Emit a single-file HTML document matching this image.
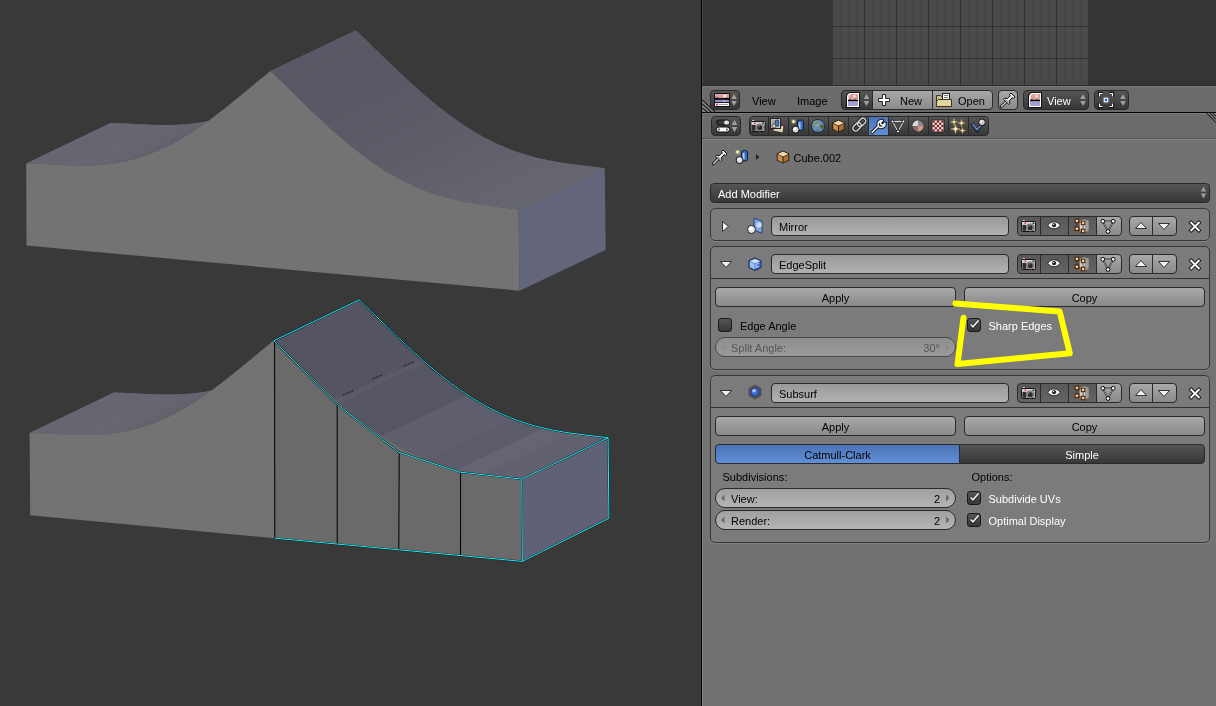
<!DOCTYPE html>
<html><head><meta charset="utf-8"><style>
*{margin:0;padding:0}
html,body{width:1216px;height:706px;overflow:hidden;background:#393939;font-family:"Liberation Sans",sans-serif;font-size:11px}
.a{position:absolute}
.w{position:absolute;box-sizing:border-box;border:1px solid #2a2a2a;line-height:18px;font-size:11px;white-space:nowrap;overflow:hidden;color:#000}
.c{text-align:center;padding-top:1px}
.bx{position:absolute;box-sizing:border-box;border:1px solid #383838;border-radius:5px;background:#7b7b7b;box-shadow:0 1px 0 #808080}
.lbl{position:absolute;color:#000;font-size:11px;line-height:12px;white-space:nowrap}
.cb{position:absolute;box-sizing:border-box;width:14px;height:14px;border:1px solid #191919;border-radius:3px;background:linear-gradient(#555,#373737)}
#ui{will-change:transform;position:absolute;left:0;top:0;width:1216px;height:706px}
</style></head><body>
<svg width="701" height="706" style="position:absolute;left:0;top:0">
<polygon points="26.2,163.5 28.3,163.5 30.3,163.6 32.3,163.6 34.3,163.7 36.3,163.7 38.3,163.8 40.3,163.9 42.3,164.0 44.3,164.1 46.3,164.2 48.3,164.3 50.3,164.4 52.3,164.5 54.3,164.6 56.3,164.7 58.3,164.9 60.3,165.0 62.3,165.0 64.3,165.1 66.3,165.2 68.3,165.3 70.3,165.4 72.3,165.4 74.3,165.5 76.3,165.5 78.3,165.6 80.3,165.6 82.3,165.6 84.3,165.6 86.3,165.5 88.3,165.5 90.3,165.4 92.3,165.4 94.3,165.3 96.3,165.2 98.3,165.0 100.3,164.9 102.3,164.7 104.3,164.5 106.3,164.3 108.3,164.1 110.3,163.8 112.3,163.6 114.3,163.3 116.3,162.9 118.3,162.6 120.3,162.2 122.3,161.8 124.4,161.4 126.4,161.0 128.4,160.5 130.4,160.0 132.4,159.5 134.4,159.0 136.4,158.4 138.4,157.8 140.4,157.2 142.4,156.5 144.4,155.9 146.4,155.2 148.4,154.4 150.4,153.7 152.4,152.9 154.4,152.1 156.4,151.3 158.4,150.4 160.4,149.5 162.4,148.6 164.4,147.7 166.4,146.7 168.4,145.7 170.4,144.7 172.4,143.7 174.4,142.6 176.4,141.5 178.4,140.4 180.4,139.2 182.4,138.1 184.4,136.9 186.4,135.7 188.4,134.4 190.4,133.2 192.4,131.9 194.4,130.6 196.4,129.2 198.4,127.9 200.4,126.5 202.4,125.1 204.4,123.7 206.4,122.3 208.4,120.9 210.4,119.4 212.4,117.9 214.4,116.4 216.4,114.9 218.4,113.4 220.4,111.8 222.5,110.3 224.5,108.7 226.5,107.1 228.5,105.5 230.5,103.9 232.5,102.3 234.5,100.7 236.5,99.1 238.5,97.4 240.5,95.8 242.5,94.2 244.5,92.5 246.5,90.9 248.5,89.2 250.5,87.5 252.5,85.9 254.5,84.2 256.5,82.6 258.5,80.9 260.5,79.3 262.5,77.7 264.5,76.0 266.5,74.4 268.5,72.8 270.5,71.2 355.8,30.4 353.8,32.0 351.8,33.6 349.8,35.2 347.8,36.8 345.8,38.5 343.8,40.1 341.8,41.8 339.8,43.4 337.8,45.1 335.7,46.7 333.7,48.4 331.7,50.1 329.7,51.7 327.7,53.4 325.7,55.0 323.7,56.7 321.7,58.3 319.7,59.9 317.7,61.5 315.6,63.2 313.6,64.8 311.6,66.4 309.6,67.9 307.6,69.5 305.6,71.1 303.6,72.6 301.6,74.2 299.6,75.7 297.6,77.2 295.5,78.7 293.5,80.1 291.5,81.6 289.5,83.0 287.5,84.4 285.5,85.8 283.5,87.2 281.5,88.5 279.5,89.9 277.5,91.2 275.5,92.5 273.4,93.7 271.4,95.0 269.4,96.2 267.4,97.4 265.4,98.6 263.4,99.7 261.4,100.8 259.4,101.9 257.4,103.0 255.4,104.0 253.3,105.1 251.3,106.1 249.3,107.0 247.3,108.0 245.3,108.9 243.3,109.8 241.3,110.6 239.3,111.5 237.3,112.3 235.3,113.1 233.2,113.8 231.2,114.6 229.2,115.3 227.2,115.9 225.2,116.6 223.2,117.2 221.2,117.8 219.2,118.4 217.2,118.9 215.2,119.4 213.1,119.9 211.1,120.4 209.1,120.8 207.1,121.3 205.1,121.7 203.1,122.0 201.1,122.4 199.1,122.7 197.1,123.0 195.1,123.3 193.1,123.5 191.0,123.8 189.0,124.0 187.0,124.2 185.0,124.3 183.0,124.5 181.0,124.6 179.0,124.7 177.0,124.8 175.0,124.9 173.0,125.0 170.9,125.0 168.9,125.1 166.9,125.1 164.9,125.1 162.9,125.1 160.9,125.0 158.9,125.0 156.9,124.9 154.9,124.9 152.9,124.8 150.8,124.8 148.8,124.7 146.8,124.6 144.8,124.5 142.8,124.4 140.8,124.3 138.8,124.2 136.8,124.1 134.8,124.0 132.8,123.9 130.7,123.8 128.7,123.7 126.7,123.6 124.7,123.5 122.7,123.4 120.7,123.3 118.7,123.3 116.7,123.2 114.7,123.2 112.7,123.1 110.7,123.1" fill="#626270"/>
<polygon points="270.5,71.2 272.5,73.1 274.5,75.0 276.5,76.9 278.5,78.9 280.5,80.8 282.5,82.7 284.5,84.7 286.5,86.6 288.5,88.6 290.5,90.5 292.5,92.5 294.5,94.4 296.5,96.4 298.5,98.3 300.5,100.3 302.5,102.2 304.5,104.2 306.5,106.1 308.5,108.0 310.5,109.9 312.5,111.9 314.5,113.8 316.5,115.7 318.5,117.5 320.5,119.4 322.5,121.3 324.5,123.1 326.5,124.9 328.5,126.8 330.5,128.6 332.5,130.4 334.5,132.1 336.5,133.9 338.5,135.7 340.5,137.4 342.5,139.1 344.5,140.8 346.5,142.5 348.5,144.1 350.5,145.8 352.5,147.4 354.5,149.0 356.5,150.6 358.5,152.1 360.5,153.7 362.5,155.2 364.5,156.7 366.5,158.1 368.5,159.6 370.5,161.0 372.5,162.4 374.5,163.8 376.5,165.2 378.5,166.5 380.5,167.8 382.5,169.1 384.5,170.4 386.5,171.6 388.5,172.8 390.5,174.0 392.5,175.2 394.5,176.3 396.5,177.4 398.5,178.5 400.5,179.6 402.5,180.6 404.5,181.7 406.5,182.7 408.5,183.6 410.5,184.6 412.5,185.5 414.5,186.4 416.5,187.3 418.5,188.2 420.5,189.0 422.5,189.8 424.5,190.6 426.5,191.3 428.5,192.1 430.5,192.8 432.5,193.5 434.5,194.2 436.5,194.8 438.5,195.5 440.5,196.1 442.5,196.7 444.5,197.2 446.5,197.8 448.5,198.3 450.5,198.8 452.5,199.3 454.5,199.8 456.5,200.3 458.5,200.7 460.5,201.2 462.5,201.6 464.5,202.0 466.5,202.4 468.5,202.7 470.5,203.1 472.5,203.4 474.5,203.8 476.5,204.1 478.5,204.4 480.5,204.7 482.5,205.0 484.5,205.3 486.5,205.6 488.5,205.8 490.5,206.1 492.5,206.3 494.5,206.6 496.5,206.8 498.5,207.1 500.5,207.3 502.5,207.6 504.5,207.8 506.5,208.1 508.5,208.3 510.5,208.6 512.5,208.8 514.5,209.1 516.5,209.3 518.5,209.6 604.8,168.3 602.8,168.0 600.8,167.8 598.8,167.5 596.8,167.3 594.8,167.0 592.8,166.8 590.7,166.5 588.7,166.3 586.7,166.1 584.7,165.8 582.7,165.6 580.7,165.3 578.7,165.1 576.7,164.8 574.7,164.6 572.7,164.3 570.7,164.0 568.7,163.8 566.7,163.5 564.6,163.2 562.6,162.9 560.6,162.6 558.6,162.2 556.6,161.9 554.6,161.5 552.6,161.2 550.6,160.8 548.6,160.4 546.6,160.0 544.6,159.5 542.6,159.1 540.6,158.6 538.5,158.2 536.5,157.7 534.5,157.2 532.5,156.6 530.5,156.1 528.5,155.5 526.5,154.9 524.5,154.3 522.5,153.7 520.5,153.0 518.5,152.4 516.5,151.7 514.5,151.0 512.4,150.2 510.4,149.5 508.4,148.7 506.4,147.9 504.4,147.0 502.4,146.2 500.4,145.3 498.4,144.4 496.4,143.5 494.4,142.5 492.4,141.6 490.4,140.6 488.4,139.6 486.3,138.5 484.3,137.5 482.3,136.4 480.3,135.2 478.3,134.1 476.3,132.9 474.3,131.8 472.3,130.5 470.3,129.3 468.3,128.0 466.3,126.8 464.3,125.4 462.3,124.1 460.2,122.8 458.2,121.4 456.2,120.0 454.2,118.6 452.2,117.1 450.2,115.6 448.2,114.2 446.2,112.6 444.2,111.1 442.2,109.6 440.2,108.0 438.2,106.4 436.2,104.8 434.1,103.1 432.1,101.5 430.1,99.8 428.1,98.1 426.1,96.4 424.1,94.7 422.1,92.9 420.1,91.2 418.1,89.4 416.1,87.6 414.1,85.8 412.1,84.0 410.1,82.2 408.0,80.3 406.0,78.5 404.0,76.6 402.0,74.7 400.0,72.8 398.0,70.9 396.0,69.0 394.0,67.1 392.0,65.2 390.0,63.3 388.0,61.3 386.0,59.4 384.0,57.4 381.9,55.5 379.9,53.6 377.9,51.6 375.9,49.7 373.9,47.7 371.9,45.8 369.9,43.8 367.9,41.9 365.9,39.9 363.9,38.0 361.9,36.1 359.9,34.2 357.9,32.3 355.8,30.4" fill="#626270"/>
<polygon points="26.2,163.5 28.3,163.5 112.7,123.1 110.7,123.1" fill="#696973"/>
<polygon points="28.3,163.5 30.3,163.6 114.7,123.2 112.7,123.1" fill="#696973"/>
<polygon points="30.3,163.6 32.3,163.6 116.7,123.2 114.7,123.2" fill="#696973"/>
<polygon points="32.3,163.6 34.3,163.7 118.7,123.3 116.7,123.2" fill="#686873"/>
<polygon points="34.3,163.7 36.3,163.7 120.7,123.3 118.7,123.3" fill="#686872"/>
<polygon points="36.3,163.7 38.3,163.8 122.7,123.4 120.7,123.3" fill="#686872"/>
<polygon points="38.3,163.8 40.3,163.9 124.7,123.5 122.7,123.4" fill="#686872"/>
<polygon points="40.3,163.9 42.3,164.0 126.7,123.6 124.7,123.5" fill="#686872"/>
<polygon points="42.3,164.0 44.3,164.1 128.7,123.7 126.7,123.6" fill="#686872"/>
<polygon points="44.3,164.1 46.3,164.2 130.7,123.8 128.7,123.7" fill="#686872"/>
<polygon points="46.3,164.2 48.3,164.3 132.8,123.9 130.7,123.8" fill="#686872"/>
<polygon points="48.3,164.3 50.3,164.4 134.8,124.0 132.8,123.9" fill="#686872"/>
<polygon points="50.3,164.4 52.3,164.5 136.8,124.1 134.8,124.0" fill="#686872"/>
<polygon points="52.3,164.5 54.3,164.6 138.8,124.2 136.8,124.1" fill="#686872"/>
<polygon points="54.3,164.6 56.3,164.7 140.8,124.3 138.8,124.2" fill="#686872"/>
<polygon points="56.3,164.7 58.3,164.9 142.8,124.4 140.8,124.3" fill="#686872"/>
<polygon points="58.3,164.9 60.3,165.0 144.8,124.5 142.8,124.4" fill="#686872"/>
<polygon points="60.3,165.0 62.3,165.0 146.8,124.6 144.8,124.5" fill="#686872"/>
<polygon points="62.3,165.0 64.3,165.1 148.8,124.7 146.8,124.6" fill="#686872"/>
<polygon points="64.3,165.1 66.3,165.2 150.8,124.8 148.8,124.7" fill="#686872"/>
<polygon points="66.3,165.2 68.3,165.3 152.9,124.8 150.8,124.8" fill="#686872"/>
<polygon points="68.3,165.3 70.3,165.4 154.9,124.9 152.9,124.8" fill="#686872"/>
<polygon points="70.3,165.4 72.3,165.4 156.9,124.9 154.9,124.9" fill="#686873"/>
<polygon points="72.3,165.4 74.3,165.5 158.9,125.0 156.9,124.9" fill="#696973"/>
<polygon points="74.3,165.5 76.3,165.5 160.9,125.0 158.9,125.0" fill="#696973"/>
<polygon points="76.3,165.5 78.3,165.6 162.9,125.1 160.9,125.0" fill="#696973"/>
<polygon points="78.3,165.6 80.3,165.6 164.9,125.1 162.9,125.1" fill="#696973"/>
<polygon points="80.3,165.6 82.3,165.6 166.9,125.1 164.9,125.1" fill="#696973"/>
<polygon points="82.3,165.6 84.3,165.6 168.9,125.1 166.9,125.1" fill="#696973"/>
<polygon points="84.3,165.6 86.3,165.5 170.9,125.0 168.9,125.1" fill="#696973"/>
<polygon points="86.3,165.5 88.3,165.5 173.0,125.0 170.9,125.0" fill="#696973"/>
<polygon points="88.3,165.5 90.3,165.4 175.0,124.9 173.0,125.0" fill="#696973"/>
<polygon points="90.3,165.4 92.3,165.4 177.0,124.8 175.0,124.9" fill="#686872"/>
<polygon points="92.3,165.4 94.3,165.3 179.0,124.7 177.0,124.8" fill="#686872"/>
<polygon points="94.3,165.3 96.3,165.2 181.0,124.6 179.0,124.7" fill="#686872"/>
<polygon points="96.3,165.2 98.3,165.0 183.0,124.5 181.0,124.6" fill="#686872"/>
<polygon points="98.3,165.0 100.3,164.9 185.0,124.3 183.0,124.5" fill="#686872"/>
<polygon points="100.3,164.9 102.3,164.7 187.0,124.2 185.0,124.3" fill="#686872"/>
<polygon points="102.3,164.7 104.3,164.5 189.0,124.0 187.0,124.2" fill="#686872"/>
<polygon points="104.3,164.5 106.3,164.3 191.0,123.8 189.0,124.0" fill="#676772"/>
<polygon points="106.3,164.3 108.3,164.1 193.1,123.5 191.0,123.8" fill="#676771"/>
<polygon points="108.3,164.1 110.3,163.8 195.1,123.3 193.1,123.5" fill="#676771"/>
<polygon points="110.3,163.8 112.3,163.6 197.1,123.0 195.1,123.3" fill="#676771"/>
<polygon points="112.3,163.6 114.3,163.3 199.1,122.7 197.1,123.0" fill="#676771"/>
<polygon points="114.3,163.3 116.3,162.9 201.1,122.4 199.1,122.7" fill="#676771"/>
<polygon points="116.3,162.9 118.3,162.6 203.1,122.0 201.1,122.4" fill="#666671"/>
<polygon points="118.3,162.6 120.3,162.2 205.1,121.7 203.1,122.0" fill="#666671"/>
<polygon points="120.3,162.2 122.3,161.8 207.1,121.3 205.1,121.7" fill="#666670"/>
<polygon points="122.3,161.8 124.4,161.4 209.1,120.8 207.1,121.3" fill="#666670"/>
<polygon points="124.4,161.4 126.4,161.0 211.1,120.4 209.1,120.8" fill="#666670"/>
<polygon points="126.4,161.0 128.4,160.5 213.1,119.9 211.1,120.4" fill="#656570"/>
<polygon points="128.4,160.5 130.4,160.0 215.2,119.4 213.1,119.9" fill="#656570"/>
<polygon points="130.4,160.0 132.4,159.5 217.2,118.9 215.2,119.4" fill="#656570"/>
<polygon points="132.4,159.5 134.4,159.0 219.2,118.4 217.2,118.9" fill="#65656f"/>
<polygon points="134.4,159.0 136.4,158.4 221.2,117.8 219.2,118.4" fill="#65656f"/>
<polygon points="136.4,158.4 138.4,157.8 223.2,117.2 221.2,117.8" fill="#64646f"/>
<polygon points="138.4,157.8 140.4,157.2 225.2,116.6 223.2,117.2" fill="#64646f"/>
<polygon points="140.4,157.2 142.4,156.5 227.2,115.9 225.2,116.6" fill="#64646f"/>
<polygon points="142.4,156.5 144.4,155.9 229.2,115.3 227.2,115.9" fill="#64646e"/>
<polygon points="144.4,155.9 146.4,155.2 231.2,114.6 229.2,115.3" fill="#64646e"/>
<polygon points="146.4,155.2 148.4,154.4 233.2,113.8 231.2,114.6" fill="#63636e"/>
<polygon points="148.4,154.4 150.4,153.7 235.3,113.1 233.2,113.8" fill="#63636e"/>
<polygon points="150.4,153.7 152.4,152.9 237.3,112.3 235.3,113.1" fill="#63636e"/>
<polygon points="152.4,152.9 154.4,152.1 239.3,111.5 237.3,112.3" fill="#63636e"/>
<polygon points="154.4,152.1 156.4,151.3 241.3,110.6 239.3,111.5" fill="#63636d"/>
<polygon points="156.4,151.3 158.4,150.4 243.3,109.8 241.3,110.6" fill="#62626d"/>
<polygon points="158.4,150.4 160.4,149.5 245.3,108.9 243.3,109.8" fill="#62626d"/>
<polygon points="160.4,149.5 162.4,148.6 247.3,108.0 245.3,108.9" fill="#62626d"/>
<polygon points="162.4,148.6 164.4,147.7 249.3,107.0 247.3,108.0" fill="#62626d"/>
<polygon points="164.4,147.7 166.4,146.7 251.3,106.1 249.3,107.0" fill="#62626c"/>
<polygon points="166.4,146.7 168.4,145.7 253.3,105.1 251.3,106.1" fill="#61616c"/>
<polygon points="168.4,145.7 170.4,144.7 255.4,104.0 253.3,105.1" fill="#61616c"/>
<polygon points="170.4,144.7 172.4,143.7 257.4,103.0 255.4,104.0" fill="#61616c"/>
<polygon points="172.4,143.7 174.4,142.6 259.4,101.9 257.4,103.0" fill="#61616c"/>
<polygon points="174.4,142.6 176.4,141.5 261.4,100.8 259.4,101.9" fill="#61616c"/>
<polygon points="176.4,141.5 178.4,140.4 263.4,99.7 261.4,100.8" fill="#60606b"/>
<polygon points="178.4,140.4 180.4,139.2 265.4,98.6 263.4,99.7" fill="#60606b"/>
<polygon points="180.4,139.2 182.4,138.1 267.4,97.4 265.4,98.6" fill="#60606b"/>
<polygon points="182.4,138.1 184.4,136.9 269.4,96.2 267.4,97.4" fill="#60606b"/>
<polygon points="184.4,136.9 186.4,135.7 271.4,95.0 269.4,96.2" fill="#60606b"/>
<polygon points="186.4,135.7 188.4,134.4 273.4,93.7 271.4,95.0" fill="#60606b"/>
<polygon points="188.4,134.4 190.4,133.2 275.5,92.5 273.4,93.7" fill="#5f5f6a"/>
<polygon points="190.4,133.2 192.4,131.9 277.5,91.2 275.5,92.5" fill="#5f5f6a"/>
<polygon points="192.4,131.9 194.4,130.6 279.5,89.9 277.5,91.2" fill="#5f5f6a"/>
<polygon points="194.4,130.6 196.4,129.2 281.5,88.5 279.5,89.9" fill="#5f5f6a"/>
<polygon points="196.4,129.2 198.4,127.9 283.5,87.2 281.5,88.5" fill="#5f5f6a"/>
<polygon points="198.4,127.9 200.4,126.5 285.5,85.8 283.5,87.2" fill="#5f5f6a"/>
<polygon points="200.4,126.5 202.4,125.1 287.5,84.4 285.5,85.8" fill="#5e5e6a"/>
<polygon points="202.4,125.1 204.4,123.7 289.5,83.0 287.5,84.4" fill="#5e5e6a"/>
<polygon points="204.4,123.7 206.4,122.3 291.5,81.6 289.5,83.0" fill="#5e5e69"/>
<polygon points="206.4,122.3 208.4,120.9 293.5,80.1 291.5,81.6" fill="#5e5e69"/>
<polygon points="208.4,120.9 210.4,119.4 295.5,78.7 293.5,80.1" fill="#5e5e69"/>
<polygon points="210.4,119.4 212.4,117.9 297.6,77.2 295.5,78.7" fill="#5e5e69"/>
<polygon points="212.4,117.9 214.4,116.4 299.6,75.7 297.6,77.2" fill="#5e5e69"/>
<polygon points="214.4,116.4 216.4,114.9 301.6,74.2 299.6,75.7" fill="#5d5d69"/>
<polygon points="216.4,114.9 218.4,113.4 303.6,72.6 301.6,74.2" fill="#5d5d69"/>
<polygon points="218.4,113.4 220.4,111.8 305.6,71.1 303.6,72.6" fill="#5d5d69"/>
<polygon points="220.4,111.8 222.5,110.3 307.6,69.5 305.6,71.1" fill="#5d5d69"/>
<polygon points="222.5,110.3 224.5,108.7 309.6,67.9 307.6,69.5" fill="#5d5d68"/>
<polygon points="224.5,108.7 226.5,107.1 311.6,66.4 309.6,67.9" fill="#5d5d68"/>
<polygon points="226.5,107.1 228.5,105.5 313.6,64.8 311.6,66.4" fill="#5d5d68"/>
<polygon points="228.5,105.5 230.5,103.9 315.6,63.2 313.6,64.8" fill="#5d5d68"/>
<polygon points="230.5,103.9 232.5,102.3 317.7,61.5 315.6,63.2" fill="#5d5d68"/>
<polygon points="232.5,102.3 234.5,100.7 319.7,59.9 317.7,61.5" fill="#5d5d68"/>
<polygon points="234.5,100.7 236.5,99.1 321.7,58.3 319.7,59.9" fill="#5d5d68"/>
<polygon points="236.5,99.1 238.5,97.4 323.7,56.7 321.7,58.3" fill="#5d5d68"/>
<polygon points="238.5,97.4 240.5,95.8 325.7,55.0 323.7,56.7" fill="#5c5c68"/>
<polygon points="240.5,95.8 242.5,94.2 327.7,53.4 325.7,55.0" fill="#5c5c68"/>
<polygon points="242.5,94.2 244.5,92.5 329.7,51.7 327.7,53.4" fill="#5c5c68"/>
<polygon points="244.5,92.5 246.5,90.9 331.7,50.1 329.7,51.7" fill="#5c5c68"/>
<polygon points="246.5,90.9 248.5,89.2 333.7,48.4 331.7,50.1" fill="#5c5c68"/>
<polygon points="248.5,89.2 250.5,87.5 335.7,46.7 333.7,48.4" fill="#5c5c68"/>
<polygon points="250.5,87.5 252.5,85.9 337.8,45.1 335.7,46.7" fill="#5c5c68"/>
<polygon points="252.5,85.9 254.5,84.2 339.8,43.4 337.8,45.1" fill="#5c5c68"/>
<polygon points="254.5,84.2 256.5,82.6 341.8,41.8 339.8,43.4" fill="#5c5c68"/>
<polygon points="256.5,82.6 258.5,80.9 343.8,40.1 341.8,41.8" fill="#5c5c68"/>
<polygon points="258.5,80.9 260.5,79.3 345.8,38.5 343.8,40.1" fill="#5c5c68"/>
<polygon points="260.5,79.3 262.5,77.7 347.8,36.8 345.8,38.5" fill="#5c5c68"/>
<polygon points="262.5,77.7 264.5,76.0 349.8,35.2 347.8,36.8" fill="#5d5d68"/>
<polygon points="264.5,76.0 266.5,74.4 351.8,33.6 349.8,35.2" fill="#5d5d68"/>
<polygon points="266.5,74.4 268.5,72.8 353.8,32.0 351.8,33.6" fill="#5d5d68"/>
<polygon points="268.5,72.8 270.5,71.2 355.8,30.4 353.8,32.0" fill="#5d5d68"/>
<polygon points="270.5,71.2 272.5,73.1 357.9,32.3 355.8,30.4" fill="#595965"/>
<polygon points="272.5,73.1 274.5,75.0 359.9,34.2 357.9,32.3" fill="#595965"/>
<polygon points="274.5,75.0 276.5,76.9 361.9,36.1 359.9,34.2" fill="#595965"/>
<polygon points="276.5,76.9 278.5,78.9 363.9,38.0 361.9,36.1" fill="#595965"/>
<polygon points="278.5,78.9 280.5,80.8 365.9,39.9 363.9,38.0" fill="#595964"/>
<polygon points="280.5,80.8 282.5,82.7 367.9,41.9 365.9,39.9" fill="#595964"/>
<polygon points="282.5,82.7 284.5,84.7 369.9,43.8 367.9,41.9" fill="#585864"/>
<polygon points="284.5,84.7 286.5,86.6 371.9,45.8 369.9,43.8" fill="#585864"/>
<polygon points="286.5,86.6 288.5,88.6 373.9,47.7 371.9,45.8" fill="#585864"/>
<polygon points="288.5,88.6 290.5,90.5 375.9,49.7 373.9,47.7" fill="#585864"/>
<polygon points="290.5,90.5 292.5,92.5 377.9,51.6 375.9,49.7" fill="#585864"/>
<polygon points="292.5,92.5 294.5,94.4 379.9,53.6 377.9,51.6" fill="#585864"/>
<polygon points="294.5,94.4 296.5,96.4 381.9,55.5 379.9,53.6" fill="#585864"/>
<polygon points="296.5,96.4 298.5,98.3 384.0,57.4 381.9,55.5" fill="#585864"/>
<polygon points="298.5,98.3 300.5,100.3 386.0,59.4 384.0,57.4" fill="#585864"/>
<polygon points="300.5,100.3 302.5,102.2 388.0,61.3 386.0,59.4" fill="#585864"/>
<polygon points="302.5,102.2 304.5,104.2 390.0,63.3 388.0,61.3" fill="#595964"/>
<polygon points="304.5,104.2 306.5,106.1 392.0,65.2 390.0,63.3" fill="#595965"/>
<polygon points="306.5,106.1 308.5,108.0 394.0,67.1 392.0,65.2" fill="#595965"/>
<polygon points="308.5,108.0 310.5,109.9 396.0,69.0 394.0,67.1" fill="#595965"/>
<polygon points="310.5,109.9 312.5,111.9 398.0,70.9 396.0,69.0" fill="#595965"/>
<polygon points="312.5,111.9 314.5,113.8 400.0,72.8 398.0,70.9" fill="#595965"/>
<polygon points="314.5,113.8 316.5,115.7 402.0,74.7 400.0,72.8" fill="#595965"/>
<polygon points="316.5,115.7 318.5,117.5 404.0,76.6 402.0,74.7" fill="#595965"/>
<polygon points="318.5,117.5 320.5,119.4 406.0,78.5 404.0,76.6" fill="#595965"/>
<polygon points="320.5,119.4 322.5,121.3 408.0,80.3 406.0,78.5" fill="#595965"/>
<polygon points="322.5,121.3 324.5,123.1 410.1,82.2 408.0,80.3" fill="#595965"/>
<polygon points="324.5,123.1 326.5,124.9 412.1,84.0 410.1,82.2" fill="#595965"/>
<polygon points="326.5,124.9 328.5,126.8 414.1,85.8 412.1,84.0" fill="#5a5a65"/>
<polygon points="328.5,126.8 330.5,128.6 416.1,87.6 414.1,85.8" fill="#5a5a65"/>
<polygon points="330.5,128.6 332.5,130.4 418.1,89.4 416.1,87.6" fill="#5a5a66"/>
<polygon points="332.5,130.4 334.5,132.1 420.1,91.2 418.1,89.4" fill="#5a5a66"/>
<polygon points="334.5,132.1 336.5,133.9 422.1,92.9 420.1,91.2" fill="#5a5a66"/>
<polygon points="336.5,133.9 338.5,135.7 424.1,94.7 422.1,92.9" fill="#5a5a66"/>
<polygon points="338.5,135.7 340.5,137.4 426.1,96.4 424.1,94.7" fill="#5a5a66"/>
<polygon points="340.5,137.4 342.5,139.1 428.1,98.1 426.1,96.4" fill="#5a5a66"/>
<polygon points="342.5,139.1 344.5,140.8 430.1,99.8 428.1,98.1" fill="#5b5b66"/>
<polygon points="344.5,140.8 346.5,142.5 432.1,101.5 430.1,99.8" fill="#5b5b66"/>
<polygon points="346.5,142.5 348.5,144.1 434.1,103.1 432.1,101.5" fill="#5b5b67"/>
<polygon points="348.5,144.1 350.5,145.8 436.2,104.8 434.1,103.1" fill="#5b5b67"/>
<polygon points="350.5,145.8 352.5,147.4 438.2,106.4 436.2,104.8" fill="#5b5b67"/>
<polygon points="352.5,147.4 354.5,149.0 440.2,108.0 438.2,106.4" fill="#5b5b67"/>
<polygon points="354.5,149.0 356.5,150.6 442.2,109.6 440.2,108.0" fill="#5c5c67"/>
<polygon points="356.5,150.6 358.5,152.1 444.2,111.1 442.2,109.6" fill="#5c5c67"/>
<polygon points="358.5,152.1 360.5,153.7 446.2,112.6 444.2,111.1" fill="#5c5c67"/>
<polygon points="360.5,153.7 362.5,155.2 448.2,114.2 446.2,112.6" fill="#5c5c68"/>
<polygon points="362.5,155.2 364.5,156.7 450.2,115.6 448.2,114.2" fill="#5c5c68"/>
<polygon points="364.5,156.7 366.5,158.1 452.2,117.1 450.2,115.6" fill="#5c5c68"/>
<polygon points="366.5,158.1 368.5,159.6 454.2,118.6 452.2,117.1" fill="#5d5d68"/>
<polygon points="368.5,159.6 370.5,161.0 456.2,120.0 454.2,118.6" fill="#5d5d68"/>
<polygon points="370.5,161.0 372.5,162.4 458.2,121.4 456.2,120.0" fill="#5d5d68"/>
<polygon points="372.5,162.4 374.5,163.8 460.2,122.8 458.2,121.4" fill="#5d5d69"/>
<polygon points="374.5,163.8 376.5,165.2 462.3,124.1 460.2,122.8" fill="#5d5d69"/>
<polygon points="376.5,165.2 378.5,166.5 464.3,125.4 462.3,124.1" fill="#5e5e69"/>
<polygon points="378.5,166.5 380.5,167.8 466.3,126.8 464.3,125.4" fill="#5e5e69"/>
<polygon points="380.5,167.8 382.5,169.1 468.3,128.0 466.3,126.8" fill="#5e5e69"/>
<polygon points="382.5,169.1 384.5,170.4 470.3,129.3 468.3,128.0" fill="#5e5e6a"/>
<polygon points="384.5,170.4 386.5,171.6 472.3,130.5 470.3,129.3" fill="#5e5e6a"/>
<polygon points="386.5,171.6 388.5,172.8 474.3,131.8 472.3,130.5" fill="#5f5f6a"/>
<polygon points="388.5,172.8 390.5,174.0 476.3,132.9 474.3,131.8" fill="#5f5f6a"/>
<polygon points="390.5,174.0 392.5,175.2 478.3,134.1 476.3,132.9" fill="#5f5f6a"/>
<polygon points="392.5,175.2 394.5,176.3 480.3,135.2 478.3,134.1" fill="#5f5f6a"/>
<polygon points="394.5,176.3 396.5,177.4 482.3,136.4 480.3,135.2" fill="#5f5f6b"/>
<polygon points="396.5,177.4 398.5,178.5 484.3,137.5 482.3,136.4" fill="#60606b"/>
<polygon points="398.5,178.5 400.5,179.6 486.3,138.5 484.3,137.5" fill="#60606b"/>
<polygon points="400.5,179.6 402.5,180.6 488.4,139.6 486.3,138.5" fill="#60606b"/>
<polygon points="402.5,180.6 404.5,181.7 490.4,140.6 488.4,139.6" fill="#60606b"/>
<polygon points="404.5,181.7 406.5,182.7 492.4,141.6 490.4,140.6" fill="#61616c"/>
<polygon points="406.5,182.7 408.5,183.6 494.4,142.5 492.4,141.6" fill="#61616c"/>
<polygon points="408.5,183.6 410.5,184.6 496.4,143.5 494.4,142.5" fill="#61616c"/>
<polygon points="410.5,184.6 412.5,185.5 498.4,144.4 496.4,143.5" fill="#61616c"/>
<polygon points="412.5,185.5 414.5,186.4 500.4,145.3 498.4,144.4" fill="#61616c"/>
<polygon points="414.5,186.4 416.5,187.3 502.4,146.2 500.4,145.3" fill="#62626c"/>
<polygon points="416.5,187.3 418.5,188.2 504.4,147.0 502.4,146.2" fill="#62626d"/>
<polygon points="418.5,188.2 420.5,189.0 506.4,147.9 504.4,147.0" fill="#62626d"/>
<polygon points="420.5,189.0 422.5,189.8 508.4,148.7 506.4,147.9" fill="#62626d"/>
<polygon points="422.5,189.8 424.5,190.6 510.4,149.5 508.4,148.7" fill="#62626d"/>
<polygon points="424.5,190.6 426.5,191.3 512.4,150.2 510.4,149.5" fill="#63636d"/>
<polygon points="426.5,191.3 428.5,192.1 514.5,151.0 512.4,150.2" fill="#63636d"/>
<polygon points="428.5,192.1 430.5,192.8 516.5,151.7 514.5,151.0" fill="#63636e"/>
<polygon points="430.5,192.8 432.5,193.5 518.5,152.4 516.5,151.7" fill="#63636e"/>
<polygon points="432.5,193.5 434.5,194.2 520.5,153.0 518.5,152.4" fill="#63636e"/>
<polygon points="434.5,194.2 436.5,194.8 522.5,153.7 520.5,153.0" fill="#63636e"/>
<polygon points="436.5,194.8 438.5,195.5 524.5,154.3 522.5,153.7" fill="#64646e"/>
<polygon points="438.5,195.5 440.5,196.1 526.5,154.9 524.5,154.3" fill="#64646e"/>
<polygon points="440.5,196.1 442.5,196.7 528.5,155.5 526.5,154.9" fill="#64646f"/>
<polygon points="442.5,196.7 444.5,197.2 530.5,156.1 528.5,155.5" fill="#64646f"/>
<polygon points="444.5,197.2 446.5,197.8 532.5,156.6 530.5,156.1" fill="#64646f"/>
<polygon points="446.5,197.8 448.5,198.3 534.5,157.2 532.5,156.6" fill="#64646f"/>
<polygon points="448.5,198.3 450.5,198.8 536.5,157.7 534.5,157.2" fill="#65656f"/>
<polygon points="450.5,198.8 452.5,199.3 538.5,158.2 536.5,157.7" fill="#65656f"/>
<polygon points="452.5,199.3 454.5,199.8 540.6,158.6 538.5,158.2" fill="#65656f"/>
<polygon points="454.5,199.8 456.5,200.3 542.6,159.1 540.6,158.6" fill="#656570"/>
<polygon points="456.5,200.3 458.5,200.7 544.6,159.5 542.6,159.1" fill="#656570"/>
<polygon points="458.5,200.7 460.5,201.2 546.6,160.0 544.6,159.5" fill="#656570"/>
<polygon points="460.5,201.2 462.5,201.6 548.6,160.4 546.6,160.0" fill="#656570"/>
<polygon points="462.5,201.6 464.5,202.0 550.6,160.8 548.6,160.4" fill="#666670"/>
<polygon points="464.5,202.0 466.5,202.4 552.6,161.2 550.6,160.8" fill="#666670"/>
<polygon points="466.5,202.4 468.5,202.7 554.6,161.5 552.6,161.2" fill="#666670"/>
<polygon points="468.5,202.7 470.5,203.1 556.6,161.9 554.6,161.5" fill="#666670"/>
<polygon points="470.5,203.1 472.5,203.4 558.6,162.2 556.6,161.9" fill="#666670"/>
<polygon points="472.5,203.4 474.5,203.8 560.6,162.6 558.6,162.2" fill="#666671"/>
<polygon points="474.5,203.8 476.5,204.1 562.6,162.9 560.6,162.6" fill="#666671"/>
<polygon points="476.5,204.1 478.5,204.4 564.6,163.2 562.6,162.9" fill="#666671"/>
<polygon points="478.5,204.4 480.5,204.7 566.7,163.5 564.6,163.2" fill="#666671"/>
<polygon points="480.5,204.7 482.5,205.0 568.7,163.8 566.7,163.5" fill="#676771"/>
<polygon points="482.5,205.0 484.5,205.3 570.7,164.0 568.7,163.8" fill="#676771"/>
<polygon points="484.5,205.3 486.5,205.6 572.7,164.3 570.7,164.0" fill="#676771"/>
<polygon points="486.5,205.6 488.5,205.8 574.7,164.6 572.7,164.3" fill="#676771"/>
<polygon points="488.5,205.8 490.5,206.1 576.7,164.8 574.7,164.6" fill="#676771"/>
<polygon points="490.5,206.1 492.5,206.3 578.7,165.1 576.7,164.8" fill="#676771"/>
<polygon points="492.5,206.3 494.5,206.6 580.7,165.3 578.7,165.1" fill="#676771"/>
<polygon points="494.5,206.6 496.5,206.8 582.7,165.6 580.7,165.3" fill="#676771"/>
<polygon points="496.5,206.8 498.5,207.1 584.7,165.8 582.7,165.6" fill="#676771"/>
<polygon points="498.5,207.1 500.5,207.3 586.7,166.1 584.7,165.8" fill="#676771"/>
<polygon points="500.5,207.3 502.5,207.6 588.7,166.3 586.7,166.1" fill="#676771"/>
<polygon points="502.5,207.6 504.5,207.8 590.7,166.5 588.7,166.3" fill="#676771"/>
<polygon points="504.5,207.8 506.5,208.1 592.8,166.8 590.7,166.5" fill="#676771"/>
<polygon points="506.5,208.1 508.5,208.3 594.8,167.0 592.8,166.8" fill="#676771"/>
<polygon points="508.5,208.3 510.5,208.6 596.8,167.3 594.8,167.0" fill="#676771"/>
<polygon points="510.5,208.6 512.5,208.8 598.8,167.5 596.8,167.3" fill="#676771"/>
<polygon points="512.5,208.8 514.5,209.1 600.8,167.8 598.8,167.5" fill="#676771"/>
<polygon points="514.5,209.1 516.5,209.3 602.8,168.0 600.8,167.8" fill="#676771"/>
<polygon points="516.5,209.3 518.5,209.6 604.8,168.3 602.8,168.0" fill="#676771"/>
<polygon points="26.2,163.5 28.3,163.5 30.3,163.6 32.3,163.6 34.3,163.7 36.3,163.7 38.3,163.8 40.3,163.9 42.3,164.0 44.3,164.1 46.3,164.2 48.3,164.3 50.3,164.4 52.3,164.5 54.3,164.6 56.3,164.7 58.3,164.9 60.3,165.0 62.3,165.0 64.3,165.1 66.3,165.2 68.3,165.3 70.3,165.4 72.3,165.4 74.3,165.5 76.3,165.5 78.3,165.6 80.3,165.6 82.3,165.6 84.3,165.6 86.3,165.5 88.3,165.5 90.3,165.4 92.3,165.4 94.3,165.3 96.3,165.2 98.3,165.0 100.3,164.9 102.3,164.7 104.3,164.5 106.3,164.3 108.3,164.1 110.3,163.8 112.3,163.6 114.3,163.3 116.3,162.9 118.3,162.6 120.3,162.2 122.3,161.8 124.4,161.4 126.4,161.0 128.4,160.5 130.4,160.0 132.4,159.5 134.4,159.0 136.4,158.4 138.4,157.8 140.4,157.2 142.4,156.5 144.4,155.9 146.4,155.2 148.4,154.4 150.4,153.7 152.4,152.9 154.4,152.1 156.4,151.3 158.4,150.4 160.4,149.5 162.4,148.6 164.4,147.7 166.4,146.7 168.4,145.7 170.4,144.7 172.4,143.7 174.4,142.6 176.4,141.5 178.4,140.4 180.4,139.2 182.4,138.1 184.4,136.9 186.4,135.7 188.4,134.4 190.4,133.2 192.4,131.9 194.4,130.6 196.4,129.2 198.4,127.9 200.4,126.5 202.4,125.1 204.4,123.7 206.4,122.3 208.4,120.9 210.4,119.4 212.4,117.9 214.4,116.4 216.4,114.9 218.4,113.4 220.4,111.8 222.5,110.3 224.5,108.7 226.5,107.1 228.5,105.5 230.5,103.9 232.5,102.3 234.5,100.7 236.5,99.1 238.5,97.4 240.5,95.8 242.5,94.2 244.5,92.5 246.5,90.9 248.5,89.2 250.5,87.5 252.5,85.9 254.5,84.2 256.5,82.6 258.5,80.9 260.5,79.3 262.5,77.7 264.5,76.0 266.5,74.4 268.5,72.8 270.5,71.2 272.5,73.1 274.5,75.0 276.5,76.9 278.5,78.9 280.5,80.8 282.5,82.7 284.5,84.7 286.5,86.6 288.5,88.6 290.5,90.5 292.5,92.5 294.5,94.4 296.5,96.4 298.5,98.3 300.5,100.3 302.5,102.2 304.5,104.2 306.5,106.1 308.5,108.0 310.5,109.9 312.5,111.9 314.5,113.8 316.5,115.7 318.5,117.5 320.5,119.4 322.5,121.3 324.5,123.1 326.5,124.9 328.5,126.8 330.5,128.6 332.5,130.4 334.5,132.1 336.5,133.9 338.5,135.7 340.5,137.4 342.5,139.1 344.5,140.8 346.5,142.5 348.5,144.1 350.5,145.8 352.5,147.4 354.5,149.0 356.5,150.6 358.5,152.1 360.5,153.7 362.5,155.2 364.5,156.7 366.5,158.1 368.5,159.6 370.5,161.0 372.5,162.4 374.5,163.8 376.5,165.2 378.5,166.5 380.5,167.8 382.5,169.1 384.5,170.4 386.5,171.6 388.5,172.8 390.5,174.0 392.5,175.2 394.5,176.3 396.5,177.4 398.5,178.5 400.5,179.6 402.5,180.6 404.5,181.7 406.5,182.7 408.5,183.6 410.5,184.6 412.5,185.5 414.5,186.4 416.5,187.3 418.5,188.2 420.5,189.0 422.5,189.8 424.5,190.6 426.5,191.3 428.5,192.1 430.5,192.8 432.5,193.5 434.5,194.2 436.5,194.8 438.5,195.5 440.5,196.1 442.5,196.7 444.5,197.2 446.5,197.8 448.5,198.3 450.5,198.8 452.5,199.3 454.5,199.8 456.5,200.3 458.5,200.7 460.5,201.2 462.5,201.6 464.5,202.0 466.5,202.4 468.5,202.7 470.5,203.1 472.5,203.4 474.5,203.8 476.5,204.1 478.5,204.4 480.5,204.7 482.5,205.0 484.5,205.3 486.5,205.6 488.5,205.8 490.5,206.1 492.5,206.3 494.5,206.6 496.5,206.8 498.5,207.1 500.5,207.3 502.5,207.6 504.5,207.8 506.5,208.1 508.5,208.3 510.5,208.6 512.5,208.8 514.5,209.1 516.5,209.3 518.5,209.6 519.6,290.7 26.5,245.6" fill="#737373"/>
<polygon points="518.5,209.6 604.8,168.3 605.7,249.9 519.6,290.7" fill="#63667a"/>
<polygon points="29.6,433.0 31.6,433.0 33.6,433.1 35.6,433.1 37.6,433.2 39.6,433.2 41.6,433.3 43.6,433.4 45.6,433.5 47.6,433.6 49.6,433.7 51.6,433.8 53.6,433.9 55.6,434.0 57.6,434.1 59.6,434.2 61.6,434.4 63.6,434.5 65.6,434.5 67.6,434.6 69.6,434.7 71.6,434.8 73.6,434.9 75.6,434.9 77.6,435.0 79.6,435.0 81.6,435.1 83.6,435.1 85.6,435.1 87.6,435.1 89.6,435.0 91.6,435.0 93.6,434.9 95.6,434.9 97.6,434.8 99.6,434.7 101.6,434.5 103.6,434.4 105.6,434.2 107.6,434.0 109.6,433.8 111.6,433.6 113.6,433.3 115.6,433.1 117.6,432.8 119.6,432.4 121.6,432.1 123.6,431.7 125.6,431.3 127.7,430.9 129.7,430.5 131.7,430.0 133.7,429.5 135.7,429.0 137.7,428.5 139.7,427.9 141.7,427.3 143.7,426.7 145.7,426.0 147.7,425.4 149.7,424.7 151.7,423.9 153.7,423.2 155.7,422.4 157.7,421.6 159.7,420.8 161.7,419.9 163.7,419.0 165.7,418.1 167.7,417.2 169.7,416.2 171.7,415.2 173.7,414.2 175.7,413.2 177.7,412.1 179.7,411.0 181.7,409.9 183.7,408.7 185.7,407.6 187.7,406.4 189.7,405.2 191.7,403.9 193.7,402.7 195.7,401.4 197.7,400.1 199.7,398.7 201.7,397.4 203.7,396.0 205.7,394.6 207.7,393.2 209.7,391.8 211.7,390.4 213.7,388.9 215.7,387.4 217.7,385.9 219.7,384.4 221.7,382.9 223.7,381.3 225.8,379.8 227.8,378.2 229.8,376.6 231.8,375.0 233.8,373.4 235.8,371.8 237.8,370.2 239.8,368.6 241.8,366.9 243.8,365.3 245.8,363.7 247.8,362.0 249.8,360.4 251.8,358.7 253.8,357.0 255.8,355.4 257.8,353.7 259.8,352.1 261.8,350.4 263.8,348.8 265.8,347.2 267.8,345.5 269.8,343.9 271.8,342.3 273.8,340.7 359.1,299.9 357.1,301.5 355.1,303.1 353.1,304.7 351.1,306.3 349.1,308.0 347.1,309.6 345.1,311.3 343.1,312.9 341.1,314.6 339.0,316.2 337.0,317.9 335.0,319.6 333.0,321.2 331.0,322.9 329.0,324.5 327.0,326.2 325.0,327.8 323.0,329.4 321.0,331.0 318.9,332.7 316.9,334.3 314.9,335.9 312.9,337.4 310.9,339.0 308.9,340.6 306.9,342.1 304.9,343.7 302.9,345.2 300.9,346.7 298.8,348.2 296.8,349.6 294.8,351.1 292.8,352.5 290.8,353.9 288.8,355.3 286.8,356.7 284.8,358.0 282.8,359.4 280.8,360.7 278.8,362.0 276.7,363.2 274.7,364.5 272.7,365.7 270.7,366.9 268.7,368.1 266.7,369.2 264.7,370.3 262.7,371.4 260.7,372.5 258.7,373.5 256.6,374.6 254.6,375.6 252.6,376.5 250.6,377.5 248.6,378.4 246.6,379.3 244.6,380.1 242.6,381.0 240.6,381.8 238.6,382.6 236.5,383.3 234.5,384.1 232.5,384.8 230.5,385.4 228.5,386.1 226.5,386.7 224.5,387.3 222.5,387.9 220.5,388.4 218.5,388.9 216.4,389.4 214.4,389.9 212.4,390.3 210.4,390.8 208.4,391.2 206.4,391.5 204.4,391.9 202.4,392.2 200.4,392.5 198.4,392.8 196.4,393.0 194.3,393.3 192.3,393.5 190.3,393.7 188.3,393.8 186.3,394.0 184.3,394.1 182.3,394.2 180.3,394.3 178.3,394.4 176.3,394.5 174.2,394.5 172.2,394.6 170.2,394.6 168.2,394.6 166.2,394.6 164.2,394.5 162.2,394.5 160.2,394.4 158.2,394.4 156.2,394.3 154.1,394.3 152.1,394.2 150.1,394.1 148.1,394.0 146.1,393.9 144.1,393.8 142.1,393.7 140.1,393.6 138.1,393.5 136.1,393.4 134.0,393.3 132.0,393.2 130.0,393.1 128.0,393.0 126.0,392.9 124.0,392.8 122.0,392.8 120.0,392.7 118.0,392.7 116.0,392.6 114.0,392.6" fill="#626270"/>
<polygon points="273.8,340.7 275.8,342.6 277.8,344.5 279.8,346.4 281.8,348.4 283.8,350.3 285.8,352.2 287.8,354.2 289.8,356.1 291.8,358.1 293.8,360.0 295.8,362.0 297.8,363.9 299.8,365.9 301.8,367.8 303.8,369.8 305.8,371.7 307.8,373.7 309.8,375.6 311.8,377.5 313.8,379.4 315.8,381.4 317.8,383.3 319.8,385.2 321.8,387.0 323.8,388.9 325.8,390.8 327.8,392.6 329.8,394.4 331.8,396.3 333.8,398.1 335.8,399.9 337.8,401.6 339.8,403.4 341.8,405.2 343.8,406.9 345.8,408.6 347.8,410.3 349.8,412.0 351.8,413.6 353.8,415.3 355.8,416.9 357.8,418.5 359.8,420.1 361.8,421.6 363.8,423.2 365.8,424.7 367.8,426.2 369.8,427.6 371.8,429.1 373.8,430.5 375.8,431.9 377.8,433.3 379.8,434.7 381.8,436.0 383.8,437.3 385.8,438.6 387.8,439.9 389.8,441.1 391.8,442.3 393.8,443.5 395.8,444.7 397.8,445.8 399.8,446.9 401.8,448.0 403.8,449.1 405.8,450.1 407.8,451.2 409.8,452.2 411.8,453.1 413.8,454.1 415.8,455.0 417.8,455.9 419.8,456.8 421.8,457.7 423.8,458.5 425.8,459.3 427.8,460.1 429.8,460.8 431.8,461.6 433.8,462.3 435.8,463.0 437.8,463.7 439.8,464.3 441.8,465.0 443.8,465.6 445.8,466.2 447.8,466.7 449.8,467.3 451.8,467.8 453.8,468.3 455.8,468.8 457.8,469.3 459.8,469.8 461.8,470.2 463.8,470.7 465.8,471.1 467.8,471.5 469.8,471.9 471.8,472.2 473.8,472.6 475.8,472.9 477.8,473.3 479.8,473.6 481.8,473.9 483.8,474.2 485.8,474.5 487.8,474.8 489.8,475.1 491.8,475.3 493.8,475.6 495.8,475.8 497.8,476.1 499.8,476.3 501.8,476.6 503.8,476.8 505.8,477.1 507.8,477.3 509.8,477.6 511.8,477.8 513.8,478.1 515.8,478.3 517.8,478.6 519.8,478.8 521.8,479.1 608.1,437.8 606.1,437.5 604.1,437.3 602.1,437.0 600.1,436.8 598.1,436.5 596.1,436.3 594.0,436.0 592.0,435.8 590.0,435.6 588.0,435.3 586.0,435.1 584.0,434.8 582.0,434.6 580.0,434.3 578.0,434.1 576.0,433.8 574.0,433.5 572.0,433.3 570.0,433.0 567.9,432.7 565.9,432.4 563.9,432.1 561.9,431.7 559.9,431.4 557.9,431.0 555.9,430.7 553.9,430.3 551.9,429.9 549.9,429.5 547.9,429.0 545.9,428.6 543.9,428.1 541.8,427.7 539.8,427.2 537.8,426.7 535.8,426.1 533.8,425.6 531.8,425.0 529.8,424.4 527.8,423.8 525.8,423.2 523.8,422.5 521.8,421.9 519.8,421.2 517.8,420.5 515.7,419.7 513.7,419.0 511.7,418.2 509.7,417.4 507.7,416.5 505.7,415.7 503.7,414.8 501.7,413.9 499.7,413.0 497.7,412.0 495.7,411.1 493.7,410.1 491.7,409.1 489.6,408.0 487.6,407.0 485.6,405.9 483.6,404.7 481.6,403.6 479.6,402.4 477.6,401.3 475.6,400.0 473.6,398.8 471.6,397.5 469.6,396.3 467.6,394.9 465.6,393.6 463.5,392.3 461.5,390.9 459.5,389.5 457.5,388.1 455.5,386.6 453.5,385.1 451.5,383.7 449.5,382.1 447.5,380.6 445.5,379.1 443.5,377.5 441.5,375.9 439.5,374.3 437.4,372.6 435.4,371.0 433.4,369.3 431.4,367.6 429.4,365.9 427.4,364.2 425.4,362.4 423.4,360.7 421.4,358.9 419.4,357.1 417.4,355.3 415.4,353.5 413.4,351.7 411.3,349.8 409.3,348.0 407.3,346.1 405.3,344.2 403.3,342.3 401.3,340.4 399.3,338.5 397.3,336.6 395.3,334.7 393.3,332.8 391.3,330.8 389.3,328.9 387.3,326.9 385.2,325.0 383.2,323.1 381.2,321.1 379.2,319.2 377.2,317.2 375.2,315.3 373.2,313.3 371.2,311.4 369.2,309.4 367.2,307.5 365.2,305.6 363.2,303.7 361.2,301.8 359.1,299.9" fill="#5c5c6b"/>
<polygon points="29.6,433.0 31.6,433.0 116.0,392.6 114.0,392.6" fill="#696973"/>
<polygon points="31.6,433.0 33.6,433.1 118.0,392.7 116.0,392.6" fill="#696973"/>
<polygon points="33.6,433.1 35.6,433.1 120.0,392.7 118.0,392.7" fill="#696973"/>
<polygon points="35.6,433.1 37.6,433.2 122.0,392.8 120.0,392.7" fill="#686873"/>
<polygon points="37.6,433.2 39.6,433.2 124.0,392.8 122.0,392.8" fill="#686872"/>
<polygon points="39.6,433.2 41.6,433.3 126.0,392.9 124.0,392.8" fill="#686872"/>
<polygon points="41.6,433.3 43.6,433.4 128.0,393.0 126.0,392.9" fill="#686872"/>
<polygon points="43.6,433.4 45.6,433.5 130.0,393.1 128.0,393.0" fill="#686872"/>
<polygon points="45.6,433.5 47.6,433.6 132.0,393.2 130.0,393.1" fill="#686872"/>
<polygon points="47.6,433.6 49.6,433.7 134.0,393.3 132.0,393.2" fill="#686872"/>
<polygon points="49.6,433.7 51.6,433.8 136.1,393.4 134.0,393.3" fill="#686872"/>
<polygon points="51.6,433.8 53.6,433.9 138.1,393.5 136.1,393.4" fill="#686872"/>
<polygon points="53.6,433.9 55.6,434.0 140.1,393.6 138.1,393.5" fill="#686872"/>
<polygon points="55.6,434.0 57.6,434.1 142.1,393.7 140.1,393.6" fill="#686872"/>
<polygon points="57.6,434.1 59.6,434.2 144.1,393.8 142.1,393.7" fill="#686872"/>
<polygon points="59.6,434.2 61.6,434.4 146.1,393.9 144.1,393.8" fill="#686872"/>
<polygon points="61.6,434.4 63.6,434.5 148.1,394.0 146.1,393.9" fill="#686872"/>
<polygon points="63.6,434.5 65.6,434.5 150.1,394.1 148.1,394.0" fill="#686872"/>
<polygon points="65.6,434.5 67.6,434.6 152.1,394.2 150.1,394.1" fill="#686872"/>
<polygon points="67.6,434.6 69.6,434.7 154.1,394.3 152.1,394.2" fill="#686872"/>
<polygon points="69.6,434.7 71.6,434.8 156.2,394.3 154.1,394.3" fill="#686872"/>
<polygon points="71.6,434.8 73.6,434.9 158.2,394.4 156.2,394.3" fill="#686872"/>
<polygon points="73.6,434.9 75.6,434.9 160.2,394.4 158.2,394.4" fill="#686873"/>
<polygon points="75.6,434.9 77.6,435.0 162.2,394.5 160.2,394.4" fill="#696973"/>
<polygon points="77.6,435.0 79.6,435.0 164.2,394.5 162.2,394.5" fill="#696973"/>
<polygon points="79.6,435.0 81.6,435.1 166.2,394.6 164.2,394.5" fill="#696973"/>
<polygon points="81.6,435.1 83.6,435.1 168.2,394.6 166.2,394.6" fill="#696973"/>
<polygon points="83.6,435.1 85.6,435.1 170.2,394.6 168.2,394.6" fill="#696973"/>
<polygon points="85.6,435.1 87.6,435.1 172.2,394.6 170.2,394.6" fill="#696973"/>
<polygon points="87.6,435.1 89.6,435.0 174.2,394.5 172.2,394.6" fill="#696973"/>
<polygon points="89.6,435.0 91.6,435.0 176.3,394.5 174.2,394.5" fill="#696973"/>
<polygon points="91.6,435.0 93.6,434.9 178.3,394.4 176.3,394.5" fill="#696973"/>
<polygon points="93.6,434.9 95.6,434.9 180.3,394.3 178.3,394.4" fill="#686872"/>
<polygon points="95.6,434.9 97.6,434.8 182.3,394.2 180.3,394.3" fill="#686872"/>
<polygon points="97.6,434.8 99.6,434.7 184.3,394.1 182.3,394.2" fill="#686872"/>
<polygon points="99.6,434.7 101.6,434.5 186.3,394.0 184.3,394.1" fill="#686872"/>
<polygon points="101.6,434.5 103.6,434.4 188.3,393.8 186.3,394.0" fill="#686872"/>
<polygon points="103.6,434.4 105.6,434.2 190.3,393.7 188.3,393.8" fill="#686872"/>
<polygon points="105.6,434.2 107.6,434.0 192.3,393.5 190.3,393.7" fill="#686872"/>
<polygon points="107.6,434.0 109.6,433.8 194.3,393.3 192.3,393.5" fill="#676772"/>
<polygon points="109.6,433.8 111.6,433.6 196.4,393.0 194.3,393.3" fill="#676771"/>
<polygon points="111.6,433.6 113.6,433.3 198.4,392.8 196.4,393.0" fill="#676771"/>
<polygon points="113.6,433.3 115.6,433.1 200.4,392.5 198.4,392.8" fill="#676771"/>
<polygon points="115.6,433.1 117.6,432.8 202.4,392.2 200.4,392.5" fill="#676771"/>
<polygon points="117.6,432.8 119.6,432.4 204.4,391.9 202.4,392.2" fill="#676771"/>
<polygon points="119.6,432.4 121.6,432.1 206.4,391.5 204.4,391.9" fill="#666671"/>
<polygon points="121.6,432.1 123.6,431.7 208.4,391.2 206.4,391.5" fill="#666671"/>
<polygon points="123.6,431.7 125.6,431.3 210.4,390.8 208.4,391.2" fill="#666670"/>
<polygon points="125.6,431.3 127.7,430.9 212.4,390.3 210.4,390.8" fill="#666670"/>
<polygon points="127.7,430.9 129.7,430.5 214.4,389.9 212.4,390.3" fill="#666670"/>
<polygon points="129.7,430.5 131.7,430.0 216.4,389.4 214.4,389.9" fill="#656570"/>
<polygon points="131.7,430.0 133.7,429.5 218.5,388.9 216.4,389.4" fill="#656570"/>
<polygon points="133.7,429.5 135.7,429.0 220.5,388.4 218.5,388.9" fill="#656570"/>
<polygon points="135.7,429.0 137.7,428.5 222.5,387.9 220.5,388.4" fill="#65656f"/>
<polygon points="137.7,428.5 139.7,427.9 224.5,387.3 222.5,387.9" fill="#65656f"/>
<polygon points="139.7,427.9 141.7,427.3 226.5,386.7 224.5,387.3" fill="#64646f"/>
<polygon points="141.7,427.3 143.7,426.7 228.5,386.1 226.5,386.7" fill="#64646f"/>
<polygon points="143.7,426.7 145.7,426.0 230.5,385.4 228.5,386.1" fill="#64646f"/>
<polygon points="145.7,426.0 147.7,425.4 232.5,384.8 230.5,385.4" fill="#64646e"/>
<polygon points="147.7,425.4 149.7,424.7 234.5,384.1 232.5,384.8" fill="#64646e"/>
<polygon points="149.7,424.7 151.7,423.9 236.5,383.3 234.5,384.1" fill="#63636e"/>
<polygon points="151.7,423.9 153.7,423.2 238.6,382.6 236.5,383.3" fill="#63636e"/>
<polygon points="153.7,423.2 155.7,422.4 240.6,381.8 238.6,382.6" fill="#63636e"/>
<polygon points="155.7,422.4 157.7,421.6 242.6,381.0 240.6,381.8" fill="#63636e"/>
<polygon points="157.7,421.6 159.7,420.8 244.6,380.1 242.6,381.0" fill="#63636d"/>
<polygon points="159.7,420.8 161.7,419.9 246.6,379.3 244.6,380.1" fill="#62626d"/>
<polygon points="161.7,419.9 163.7,419.0 248.6,378.4 246.6,379.3" fill="#62626d"/>
<polygon points="163.7,419.0 165.7,418.1 250.6,377.5 248.6,378.4" fill="#62626d"/>
<polygon points="165.7,418.1 167.7,417.2 252.6,376.5 250.6,377.5" fill="#62626d"/>
<polygon points="167.7,417.2 169.7,416.2 254.6,375.6 252.6,376.5" fill="#62626c"/>
<polygon points="169.7,416.2 171.7,415.2 256.6,374.6 254.6,375.6" fill="#61616c"/>
<polygon points="171.7,415.2 173.7,414.2 258.7,373.5 256.6,374.6" fill="#61616c"/>
<polygon points="173.7,414.2 175.7,413.2 260.7,372.5 258.7,373.5" fill="#61616c"/>
<polygon points="175.7,413.2 177.7,412.1 262.7,371.4 260.7,372.5" fill="#61616c"/>
<polygon points="177.7,412.1 179.7,411.0 264.7,370.3 262.7,371.4" fill="#61616c"/>
<polygon points="179.7,411.0 181.7,409.9 266.7,369.2 264.7,370.3" fill="#60606b"/>
<polygon points="181.7,409.9 183.7,408.7 268.7,368.1 266.7,369.2" fill="#60606b"/>
<polygon points="183.7,408.7 185.7,407.6 270.7,366.9 268.7,368.1" fill="#60606b"/>
<polygon points="185.7,407.6 187.7,406.4 272.7,365.7 270.7,366.9" fill="#60606b"/>
<polygon points="187.7,406.4 189.7,405.2 274.7,364.5 272.7,365.7" fill="#60606b"/>
<polygon points="189.7,405.2 191.7,403.9 276.7,363.2 274.7,364.5" fill="#60606b"/>
<polygon points="191.7,403.9 193.7,402.7 278.8,362.0 276.7,363.2" fill="#5f5f6a"/>
<polygon points="193.7,402.7 195.7,401.4 280.8,360.7 278.8,362.0" fill="#5f5f6a"/>
<polygon points="195.7,401.4 197.7,400.1 282.8,359.4 280.8,360.7" fill="#5f5f6a"/>
<polygon points="197.7,400.1 199.7,398.7 284.8,358.0 282.8,359.4" fill="#5f5f6a"/>
<polygon points="199.7,398.7 201.7,397.4 286.8,356.7 284.8,358.0" fill="#5f5f6a"/>
<polygon points="201.7,397.4 203.7,396.0 288.8,355.3 286.8,356.7" fill="#5f5f6a"/>
<polygon points="203.7,396.0 205.7,394.6 290.8,353.9 288.8,355.3" fill="#5e5e6a"/>
<polygon points="205.7,394.6 207.7,393.2 292.8,352.5 290.8,353.9" fill="#5e5e6a"/>
<polygon points="207.7,393.2 209.7,391.8 294.8,351.1 292.8,352.5" fill="#5e5e69"/>
<polygon points="209.7,391.8 211.7,390.4 296.8,349.6 294.8,351.1" fill="#5e5e69"/>
<polygon points="211.7,390.4 213.7,388.9 298.8,348.2 296.8,349.6" fill="#5e5e69"/>
<polygon points="213.7,388.9 215.7,387.4 300.9,346.7 298.8,348.2" fill="#5e5e69"/>
<polygon points="215.7,387.4 217.7,385.9 302.9,345.2 300.9,346.7" fill="#5e5e69"/>
<polygon points="217.7,385.9 219.7,384.4 304.9,343.7 302.9,345.2" fill="#5d5d69"/>
<polygon points="219.7,384.4 221.7,382.9 306.9,342.1 304.9,343.7" fill="#5d5d69"/>
<polygon points="221.7,382.9 223.7,381.3 308.9,340.6 306.9,342.1" fill="#5d5d69"/>
<polygon points="223.7,381.3 225.8,379.8 310.9,339.0 308.9,340.6" fill="#5d5d69"/>
<polygon points="225.8,379.8 227.8,378.2 312.9,337.4 310.9,339.0" fill="#5d5d68"/>
<polygon points="227.8,378.2 229.8,376.6 314.9,335.9 312.9,337.4" fill="#5d5d68"/>
<polygon points="229.8,376.6 231.8,375.0 316.9,334.3 314.9,335.9" fill="#5d5d68"/>
<polygon points="231.8,375.0 233.8,373.4 318.9,332.7 316.9,334.3" fill="#5d5d68"/>
<polygon points="233.8,373.4 235.8,371.8 321.0,331.0 318.9,332.7" fill="#5d5d68"/>
<polygon points="235.8,371.8 237.8,370.2 323.0,329.4 321.0,331.0" fill="#5d5d68"/>
<polygon points="237.8,370.2 239.8,368.6 325.0,327.8 323.0,329.4" fill="#5d5d68"/>
<polygon points="239.8,368.6 241.8,366.9 327.0,326.2 325.0,327.8" fill="#5d5d68"/>
<polygon points="241.8,366.9 243.8,365.3 329.0,324.5 327.0,326.2" fill="#5c5c68"/>
<polygon points="243.8,365.3 245.8,363.7 331.0,322.9 329.0,324.5" fill="#5c5c68"/>
<polygon points="245.8,363.7 247.8,362.0 333.0,321.2 331.0,322.9" fill="#5c5c68"/>
<polygon points="247.8,362.0 249.8,360.4 335.0,319.6 333.0,321.2" fill="#5c5c68"/>
<polygon points="249.8,360.4 251.8,358.7 337.0,317.9 335.0,319.6" fill="#5c5c68"/>
<polygon points="251.8,358.7 253.8,357.0 339.0,316.2 337.0,317.9" fill="#5c5c68"/>
<polygon points="253.8,357.0 255.8,355.4 341.1,314.6 339.0,316.2" fill="#5c5c68"/>
<polygon points="255.8,355.4 257.8,353.7 343.1,312.9 341.1,314.6" fill="#5c5c68"/>
<polygon points="257.8,353.7 259.8,352.1 345.1,311.3 343.1,312.9" fill="#5c5c68"/>
<polygon points="259.8,352.1 261.8,350.4 347.1,309.6 345.1,311.3" fill="#5c5c68"/>
<polygon points="261.8,350.4 263.8,348.8 349.1,308.0 347.1,309.6" fill="#5c5c68"/>
<polygon points="263.8,348.8 265.8,347.2 351.1,306.3 349.1,308.0" fill="#5c5c68"/>
<polygon points="265.8,347.2 267.8,345.5 353.1,304.7 351.1,306.3" fill="#5d5d68"/>
<polygon points="267.8,345.5 269.8,343.9 355.1,303.1 353.1,304.7" fill="#5d5d68"/>
<polygon points="269.8,343.9 271.8,342.3 357.1,301.5 355.1,303.1" fill="#5d5d68"/>
<polygon points="271.8,342.3 273.8,340.7 359.1,299.9 357.1,301.5" fill="#5d5d68"/>
<polygon points="273.8,340.7 275.8,342.6 361.2,301.8 359.1,299.9" fill="#545463"/>
<polygon points="275.8,342.6 277.8,344.5 363.2,303.7 361.2,301.8" fill="#545463"/>
<polygon points="277.8,344.5 279.8,346.4 365.2,305.6 363.2,303.7" fill="#545463"/>
<polygon points="279.8,346.4 281.8,348.4 367.2,307.5 365.2,305.6" fill="#545463"/>
<polygon points="281.8,348.4 283.8,350.3 369.2,309.4 367.2,307.5" fill="#545463"/>
<polygon points="283.8,350.3 285.8,352.2 371.2,311.4 369.2,309.4" fill="#545463"/>
<polygon points="285.8,352.2 287.8,354.2 373.2,313.3 371.2,311.4" fill="#545463"/>
<polygon points="287.8,354.2 289.8,356.1 375.2,315.3 373.2,313.3" fill="#545463"/>
<polygon points="289.8,356.1 291.8,358.1 377.2,317.2 375.2,315.3" fill="#545463"/>
<polygon points="291.8,358.1 293.8,360.0 379.2,319.2 377.2,317.2" fill="#545463"/>
<polygon points="293.8,360.0 295.8,362.0 381.2,321.1 379.2,319.2" fill="#545463"/>
<polygon points="295.8,362.0 297.8,363.9 383.2,323.1 381.2,321.1" fill="#545463"/>
<polygon points="297.8,363.9 299.8,365.9 385.2,325.0 383.2,323.1" fill="#545463"/>
<polygon points="299.8,365.9 301.8,367.8 387.3,326.9 385.2,325.0" fill="#545463"/>
<polygon points="301.8,367.8 303.8,369.8 389.3,328.9 387.3,326.9" fill="#545463"/>
<polygon points="303.8,369.8 305.8,371.7 391.3,330.8 389.3,328.9" fill="#545463"/>
<polygon points="305.8,371.7 307.8,373.7 393.3,332.8 391.3,330.8" fill="#545463"/>
<polygon points="307.8,373.7 309.8,375.6 395.3,334.7 393.3,332.8" fill="#545463"/>
<polygon points="309.8,375.6 311.8,377.5 397.3,336.6 395.3,334.7" fill="#545463"/>
<polygon points="311.8,377.5 313.8,379.4 399.3,338.5 397.3,336.6" fill="#545463"/>
<polygon points="313.8,379.4 315.8,381.4 401.3,340.4 399.3,338.5" fill="#545463"/>
<polygon points="315.8,381.4 317.8,383.3 403.3,342.3 401.3,340.4" fill="#545463"/>
<polygon points="317.8,383.3 319.8,385.2 405.3,344.2 403.3,342.3" fill="#545463"/>
<polygon points="319.8,385.2 321.8,387.0 407.3,346.1 405.3,344.2" fill="#545463"/>
<polygon points="321.8,387.0 323.8,388.9 409.3,348.0 407.3,346.1" fill="#545463"/>
<polygon points="323.8,388.9 325.8,390.8 411.3,349.8 409.3,348.0" fill="#545463"/>
<polygon points="325.8,390.8 327.8,392.6 413.4,351.7 411.3,349.8" fill="#545463"/>
<polygon points="327.8,392.6 329.8,394.4 415.4,353.5 413.4,351.7" fill="#545463"/>
<polygon points="329.8,394.4 331.8,396.3 417.4,355.3 415.4,353.5" fill="#545463"/>
<polygon points="331.8,396.3 333.8,398.1 419.4,357.1 417.4,355.3" fill="#545463"/>
<polygon points="333.8,398.1 335.8,399.9 421.4,358.9 419.4,357.1" fill="#545463"/>
<polygon points="335.8,399.9 337.8,401.6 423.4,360.7 421.4,358.9" fill="#5b5b6a"/>
<polygon points="337.8,401.6 339.8,403.4 425.4,362.4 423.4,360.7" fill="#5b5b6a"/>
<polygon points="339.8,403.4 341.8,405.2 427.4,364.2 425.4,362.4" fill="#555564"/>
<polygon points="341.8,405.2 343.8,406.9 429.4,365.9 427.4,364.2" fill="#555564"/>
<polygon points="343.8,406.9 345.8,408.6 431.4,367.6 429.4,365.9" fill="#555564"/>
<polygon points="345.8,408.6 347.8,410.3 433.4,369.3 431.4,367.6" fill="#555564"/>
<polygon points="347.8,410.3 349.8,412.0 435.4,371.0 433.4,369.3" fill="#555564"/>
<polygon points="349.8,412.0 351.8,413.6 437.4,372.6 435.4,371.0" fill="#555564"/>
<polygon points="351.8,413.6 353.8,415.3 439.5,374.3 437.4,372.6" fill="#555564"/>
<polygon points="353.8,415.3 355.8,416.9 441.5,375.9 439.5,374.3" fill="#555564"/>
<polygon points="355.8,416.9 357.8,418.5 443.5,377.5 441.5,375.9" fill="#555564"/>
<polygon points="357.8,418.5 359.8,420.1 445.5,379.1 443.5,377.5" fill="#555564"/>
<polygon points="359.8,420.1 361.8,421.6 447.5,380.6 445.5,379.1" fill="#555564"/>
<polygon points="361.8,421.6 363.8,423.2 449.5,382.1 447.5,380.6" fill="#555564"/>
<polygon points="363.8,423.2 365.8,424.7 451.5,383.7 449.5,382.1" fill="#555564"/>
<polygon points="365.8,424.7 367.8,426.2 453.5,385.1 451.5,383.7" fill="#555564"/>
<polygon points="367.8,426.2 369.8,427.6 455.5,386.6 453.5,385.1" fill="#555564"/>
<polygon points="369.8,427.6 371.8,429.1 457.5,388.1 455.5,386.6" fill="#555564"/>
<polygon points="371.8,429.1 373.8,430.5 459.5,389.5 457.5,388.1" fill="#555564"/>
<polygon points="373.8,430.5 375.8,431.9 461.5,390.9 459.5,389.5" fill="#555564"/>
<polygon points="375.8,431.9 377.8,433.3 463.5,392.3 461.5,390.9" fill="#555564"/>
<polygon points="377.8,433.3 379.8,434.7 465.6,393.6 463.5,392.3" fill="#555564"/>
<polygon points="379.8,434.7 381.8,436.0 467.6,394.9 465.6,393.6" fill="#555564"/>
<polygon points="381.8,436.0 383.8,437.3 469.6,396.3 467.6,394.9" fill="#5f5f6e"/>
<polygon points="383.8,437.3 385.8,438.6 471.6,397.5 469.6,396.3" fill="#5f5f6e"/>
<polygon points="385.8,438.6 387.8,439.9 473.6,398.8 471.6,397.5" fill="#5f5f6e"/>
<polygon points="387.8,439.9 389.8,441.1 475.6,400.0 473.6,398.8" fill="#5f5f6e"/>
<polygon points="389.8,441.1 391.8,442.3 477.6,401.3 475.6,400.0" fill="#5f5f6e"/>
<polygon points="391.8,442.3 393.8,443.5 479.6,402.4 477.6,401.3" fill="#5f5f6e"/>
<polygon points="393.8,443.5 395.8,444.7 481.6,403.6 479.6,402.4" fill="#5f5f6e"/>
<polygon points="395.8,444.7 397.8,445.8 483.6,404.7 481.6,403.6" fill="#5f5f6e"/>
<polygon points="397.8,445.8 399.8,446.9 485.6,405.9 483.6,404.7" fill="#5f5f6e"/>
<polygon points="399.8,446.9 401.8,448.0 487.6,407.0 485.6,405.9" fill="#5f5f6e"/>
<polygon points="401.8,448.0 403.8,449.1 489.6,408.0 487.6,407.0" fill="#5f5f6e"/>
<polygon points="403.8,449.1 405.8,450.1 491.7,409.1 489.6,408.0" fill="#5f5f6e"/>
<polygon points="405.8,450.1 407.8,451.2 493.7,410.1 491.7,409.1" fill="#5f5f6e"/>
<polygon points="407.8,451.2 409.8,452.2 495.7,411.1 493.7,410.1" fill="#5f5f6e"/>
<polygon points="409.8,452.2 411.8,453.1 497.7,412.0 495.7,411.1" fill="#5f5f6e"/>
<polygon points="411.8,453.1 413.8,454.1 499.7,413.0 497.7,412.0" fill="#5f5f6e"/>
<polygon points="413.8,454.1 415.8,455.0 501.7,413.9 499.7,413.0" fill="#5f5f6e"/>
<polygon points="415.8,455.0 417.8,455.9 503.7,414.8 501.7,413.9" fill="#5f5f6e"/>
<polygon points="417.8,455.9 419.8,456.8 505.7,415.7 503.7,414.8" fill="#5f5f6e"/>
<polygon points="419.8,456.8 421.8,457.7 507.7,416.5 505.7,415.7" fill="#5f5f6e"/>
<polygon points="421.8,457.7 423.8,458.5 509.7,417.4 507.7,416.5" fill="#5f5f6e"/>
<polygon points="423.8,458.5 425.8,459.3 511.7,418.2 509.7,417.4" fill="#5f5f6e"/>
<polygon points="425.8,459.3 427.8,460.1 513.7,419.0 511.7,418.2" fill="#5f5f6e"/>
<polygon points="427.8,460.1 429.8,460.8 515.7,419.7 513.7,419.0" fill="#5c5c6b"/>
<polygon points="429.8,460.8 431.8,461.6 517.8,420.5 515.7,419.7" fill="#5c5c6b"/>
<polygon points="431.8,461.6 433.8,462.3 519.8,421.2 517.8,420.5" fill="#5c5c6b"/>
<polygon points="433.8,462.3 435.8,463.0 521.8,421.9 519.8,421.2" fill="#5c5c6b"/>
<polygon points="435.8,463.0 437.8,463.7 523.8,422.5 521.8,421.9" fill="#5c5c6b"/>
<polygon points="437.8,463.7 439.8,464.3 525.8,423.2 523.8,422.5" fill="#5c5c6b"/>
<polygon points="439.8,464.3 441.8,465.0 527.8,423.8 525.8,423.2" fill="#5c5c6b"/>
<polygon points="441.8,465.0 443.8,465.6 529.8,424.4 527.8,423.8" fill="#5c5c6b"/>
<polygon points="443.8,465.6 445.8,466.2 531.8,425.0 529.8,424.4" fill="#5c5c6b"/>
<polygon points="445.8,466.2 447.8,466.7 533.8,425.6 531.8,425.0" fill="#5c5c6b"/>
<polygon points="447.8,466.7 449.8,467.3 535.8,426.1 533.8,425.6" fill="#5c5c6b"/>
<polygon points="449.8,467.3 451.8,467.8 537.8,426.7 535.8,426.1" fill="#5c5c6b"/>
<polygon points="451.8,467.8 453.8,468.3 539.8,427.2 537.8,426.7" fill="#5c5c6b"/>
<polygon points="453.8,468.3 455.8,468.8 541.8,427.7 539.8,427.2" fill="#5c5c6b"/>
<polygon points="455.8,468.8 457.8,469.3 543.9,428.1 541.8,427.7" fill="#5c5c6b"/>
<polygon points="457.8,469.3 459.8,469.8 545.9,428.6 543.9,428.1" fill="#666675"/>
<polygon points="459.8,469.8 461.8,470.2 547.9,429.0 545.9,428.6" fill="#666675"/>
<polygon points="461.8,470.2 463.8,470.7 549.9,429.5 547.9,429.0" fill="#666675"/>
<polygon points="463.8,470.7 465.8,471.1 551.9,429.9 549.9,429.5" fill="#666675"/>
<polygon points="465.8,471.1 467.8,471.5 553.9,430.3 551.9,429.9" fill="#666675"/>
<polygon points="467.8,471.5 469.8,471.9 555.9,430.7 553.9,430.3" fill="#666675"/>
<polygon points="469.8,471.9 471.8,472.2 557.9,431.0 555.9,430.7" fill="#666675"/>
<polygon points="471.8,472.2 473.8,472.6 559.9,431.4 557.9,431.0" fill="#666675"/>
<polygon points="473.8,472.6 475.8,472.9 561.9,431.7 559.9,431.4" fill="#666675"/>
<polygon points="475.8,472.9 477.8,473.3 563.9,432.1 561.9,431.7" fill="#666675"/>
<polygon points="477.8,473.3 479.8,473.6 565.9,432.4 563.9,432.1" fill="#666675"/>
<polygon points="479.8,473.6 481.8,473.9 567.9,432.7 565.9,432.4" fill="#666675"/>
<polygon points="481.8,473.9 483.8,474.2 570.0,433.0 567.9,432.7" fill="#666675"/>
<polygon points="483.8,474.2 485.8,474.5 572.0,433.3 570.0,433.0" fill="#626271"/>
<polygon points="485.8,474.5 487.8,474.8 574.0,433.5 572.0,433.3" fill="#626271"/>
<polygon points="487.8,474.8 489.8,475.1 576.0,433.8 574.0,433.5" fill="#626271"/>
<polygon points="489.8,475.1 491.8,475.3 578.0,434.1 576.0,433.8" fill="#626271"/>
<polygon points="491.8,475.3 493.8,475.6 580.0,434.3 578.0,434.1" fill="#626271"/>
<polygon points="493.8,475.6 495.8,475.8 582.0,434.6 580.0,434.3" fill="#626271"/>
<polygon points="495.8,475.8 497.8,476.1 584.0,434.8 582.0,434.6" fill="#626271"/>
<polygon points="497.8,476.1 499.8,476.3 586.0,435.1 584.0,434.8" fill="#626271"/>
<polygon points="499.8,476.3 501.8,476.6 588.0,435.3 586.0,435.1" fill="#626271"/>
<polygon points="501.8,476.6 503.8,476.8 590.0,435.6 588.0,435.3" fill="#626271"/>
<polygon points="503.8,476.8 505.8,477.1 592.0,435.8 590.0,435.6" fill="#626271"/>
<polygon points="505.8,477.1 507.8,477.3 594.0,436.0 592.0,435.8" fill="#626271"/>
<polygon points="507.8,477.3 509.8,477.6 596.1,436.3 594.0,436.0" fill="#626271"/>
<polygon points="509.8,477.6 511.8,477.8 598.1,436.5 596.1,436.3" fill="#626271"/>
<polygon points="511.8,477.8 513.8,478.1 600.1,436.8 598.1,436.5" fill="#626271"/>
<polygon points="513.8,478.1 515.8,478.3 602.1,437.0 600.1,436.8" fill="#626271"/>
<polygon points="515.8,478.3 517.8,478.6 604.1,437.3 602.1,437.0" fill="#626271"/>
<polygon points="517.8,478.6 519.8,478.8 606.1,437.5 604.1,437.3" fill="#626271"/>
<polygon points="519.8,478.8 521.8,479.1 608.1,437.8 606.1,437.5" fill="#626271"/>
<polygon points="29.6,433.0 31.6,433.0 33.6,433.1 35.6,433.1 37.6,433.2 39.6,433.2 41.6,433.3 43.6,433.4 45.6,433.5 47.6,433.6 49.6,433.7 51.6,433.8 53.6,433.9 55.6,434.0 57.6,434.1 59.6,434.2 61.6,434.4 63.6,434.5 65.6,434.5 67.6,434.6 69.6,434.7 71.6,434.8 73.6,434.9 75.6,434.9 77.6,435.0 79.6,435.0 81.6,435.1 83.6,435.1 85.6,435.1 87.6,435.1 89.6,435.0 91.6,435.0 93.6,434.9 95.6,434.9 97.6,434.8 99.6,434.7 101.6,434.5 103.6,434.4 105.6,434.2 107.6,434.0 109.6,433.8 111.6,433.6 113.6,433.3 115.6,433.1 117.6,432.8 119.6,432.4 121.6,432.1 123.6,431.7 125.6,431.3 127.7,430.9 129.7,430.5 131.7,430.0 133.7,429.5 135.7,429.0 137.7,428.5 139.7,427.9 141.7,427.3 143.7,426.7 145.7,426.0 147.7,425.4 149.7,424.7 151.7,423.9 153.7,423.2 155.7,422.4 157.7,421.6 159.7,420.8 161.7,419.9 163.7,419.0 165.7,418.1 167.7,417.2 169.7,416.2 171.7,415.2 173.7,414.2 175.7,413.2 177.7,412.1 179.7,411.0 181.7,409.9 183.7,408.7 185.7,407.6 187.7,406.4 189.7,405.2 191.7,403.9 193.7,402.7 195.7,401.4 197.7,400.1 199.7,398.7 201.7,397.4 203.7,396.0 205.7,394.6 207.7,393.2 209.7,391.8 211.7,390.4 213.7,388.9 215.7,387.4 217.7,385.9 219.7,384.4 221.7,382.9 223.7,381.3 225.8,379.8 227.8,378.2 229.8,376.6 231.8,375.0 233.8,373.4 235.8,371.8 237.8,370.2 239.8,368.6 241.8,366.9 243.8,365.3 245.8,363.7 247.8,362.0 249.8,360.4 251.8,358.7 253.8,357.0 255.8,355.4 257.8,353.7 259.8,352.1 261.8,350.4 263.8,348.8 265.8,347.2 267.8,345.5 269.8,343.9 271.8,342.3 273.8,340.7 274.6,538.2 30.2,515.3" fill="#737373"/>
<polygon points="273.8,340.7 275.8,342.6 277.8,344.5 279.8,346.4 281.8,348.4 283.8,350.3 285.8,352.2 287.8,354.2 289.8,356.1 291.8,358.1 293.8,360.0 295.8,362.0 297.8,363.9 299.8,365.9 301.8,367.8 303.8,369.8 305.8,371.7 307.8,373.7 309.8,375.6 311.8,377.5 313.8,379.4 315.8,381.4 317.8,383.3 319.8,385.2 321.8,387.0 323.8,388.9 325.8,390.8 327.8,392.6 329.8,394.4 331.8,396.3 333.8,398.1 335.8,399.9 337.8,401.6 339.8,403.4 341.8,405.2 343.8,406.9 345.8,408.6 347.8,410.3 349.8,412.0 351.8,413.6 353.8,415.3 355.8,416.9 357.8,418.5 359.8,420.1 361.8,421.6 363.8,423.2 365.8,424.7 367.8,426.2 369.8,427.6 371.8,429.1 373.8,430.5 375.8,431.9 377.8,433.3 379.8,434.7 381.8,436.0 383.8,437.3 385.8,438.6 387.8,439.9 389.8,441.1 391.8,442.3 393.8,443.5 395.8,444.7 397.8,445.8 399.8,446.9 401.8,448.0 403.8,449.1 405.8,450.1 407.8,451.2 409.8,452.2 411.8,453.1 413.8,454.1 415.8,455.0 417.8,455.9 419.8,456.8 421.8,457.7 423.8,458.5 425.8,459.3 427.8,460.1 429.8,460.8 431.8,461.6 433.8,462.3 435.8,463.0 437.8,463.7 439.8,464.3 441.8,465.0 443.8,465.6 445.8,466.2 447.8,466.7 449.8,467.3 451.8,467.8 453.8,468.3 455.8,468.8 457.8,469.3 459.8,469.8 461.8,470.2 463.8,470.7 465.8,471.1 467.8,471.5 469.8,471.9 471.8,472.2 473.8,472.6 475.8,472.9 477.8,473.3 479.8,473.6 481.8,473.9 483.8,474.2 485.8,474.5 487.8,474.8 489.8,475.1 491.8,475.3 493.8,475.6 495.8,475.8 497.8,476.1 499.8,476.3 501.8,476.6 503.8,476.8 505.8,477.1 507.8,477.3 509.8,477.6 511.8,477.8 513.8,478.1 515.8,478.3 517.8,478.6 519.8,478.8 521.8,479.1 522.3,561.4 460.3,555.6 398.6,549.8 337.0,544.0 274.6,538.2" fill="#6a6a6a"/>
<polygon points="521.8,479.1 608.1,437.8 608.9,518.4 522.3,561.4" fill="#5f6276"/>
<line x1="274.6" y1="340.7" x2="274.8" y2="538.2" stroke="#000" stroke-width="1" fill="none"/>
<line x1="337.2" y1="403.7" x2="337.2" y2="544.0" stroke="#000" stroke-width="1" fill="none"/>
<line x1="399.2" y1="452.1" x2="398.8" y2="549.8" stroke="#000" stroke-width="1" fill="none"/>
<line x1="460.6" y1="472.1" x2="460.5" y2="555.6" stroke="#000" stroke-width="1" fill="none"/>
<line x1="343" y1="395" x2="353" y2="391" stroke="#000" stroke-width="1" stroke-dasharray="1 1"/>
<line x1="372" y1="379" x2="382" y2="375" stroke="#000" stroke-width="1" stroke-dasharray="1 1"/>
<line x1="404" y1="366" x2="414" y2="362" stroke="#000" stroke-width="1" stroke-dasharray="1 1"/>
<polyline points="273.8,340.7 359.1,299.9" stroke="#000" stroke-width="1.6" fill="none" stroke-linejoin="round"/>
<polyline points="359.1,299.9 361.2,301.8 363.2,303.7 365.2,305.6 367.2,307.5 369.2,309.4 371.2,311.4 373.2,313.3 375.2,315.3 377.2,317.2 379.2,319.2 381.2,321.1 383.2,323.1 385.2,325.0 387.3,326.9 389.3,328.9 391.3,330.8 393.3,332.8 395.3,334.7 397.3,336.6 399.3,338.5 401.3,340.4 403.3,342.3 405.3,344.2 407.3,346.1 409.3,348.0 411.3,349.8 413.4,351.7 415.4,353.5 417.4,355.3 419.4,357.1 421.4,358.9 423.4,360.7 425.4,362.4 427.4,364.2 429.4,365.9 431.4,367.6 433.4,369.3 435.4,371.0 437.4,372.6 439.5,374.3 441.5,375.9 443.5,377.5 445.5,379.1 447.5,380.6 449.5,382.1 451.5,383.7 453.5,385.1 455.5,386.6 457.5,388.1 459.5,389.5 461.5,390.9 463.5,392.3 465.6,393.6 467.6,394.9 469.6,396.3 471.6,397.5 473.6,398.8 475.6,400.0 477.6,401.3 479.6,402.4 481.6,403.6 483.6,404.7 485.6,405.9 487.6,407.0 489.6,408.0 491.7,409.1 493.7,410.1 495.7,411.1 497.7,412.0 499.7,413.0 501.7,413.9 503.7,414.8 505.7,415.7 507.7,416.5 509.7,417.4 511.7,418.2 513.7,419.0 515.7,419.7 517.8,420.5 519.8,421.2 521.8,421.9 523.8,422.5 525.8,423.2 527.8,423.8 529.8,424.4 531.8,425.0 533.8,425.6 535.8,426.1 537.8,426.7 539.8,427.2 541.8,427.7 543.9,428.1 545.9,428.6 547.9,429.0 549.9,429.5 551.9,429.9 553.9,430.3 555.9,430.7 557.9,431.0 559.9,431.4 561.9,431.7 563.9,432.1 565.9,432.4 567.9,432.7 570.0,433.0 572.0,433.3 574.0,433.5 576.0,433.8 578.0,434.1 580.0,434.3 582.0,434.6 584.0,434.8 586.0,435.1 588.0,435.3 590.0,435.6 592.0,435.8 594.0,436.0 596.1,436.3 598.1,436.5 600.1,436.8 602.1,437.0 604.1,437.3 606.1,437.5 608.1,437.8" stroke="#000" stroke-width="1.6" fill="none" stroke-linejoin="round"/>
<polyline points="273.8,340.7 336.4,403.7 398.4,452.1 459.8,472.1 521.8,479.1" stroke="#000" stroke-width="1.6" fill="none" stroke-linejoin="round"/>
<polyline points="521.8,479.1 608.1,437.8 608.9,518.4 522.3,561.4 521.8,479.1" stroke="#000" stroke-width="1.6" fill="none" stroke-linejoin="round"/>
<polyline points="274.6,538.2 522.3,561.4" stroke="#000" stroke-width="1.6" fill="none" stroke-linejoin="round"/>
<polyline points="273.8,340.7 359.1,299.9" stroke="#20f0ff" stroke-width="1" fill="none" stroke-linejoin="round"/>
<polyline points="359.1,299.9 361.2,301.8 363.2,303.7 365.2,305.6 367.2,307.5 369.2,309.4 371.2,311.4 373.2,313.3 375.2,315.3 377.2,317.2 379.2,319.2 381.2,321.1 383.2,323.1 385.2,325.0 387.3,326.9 389.3,328.9 391.3,330.8 393.3,332.8 395.3,334.7 397.3,336.6 399.3,338.5 401.3,340.4 403.3,342.3 405.3,344.2 407.3,346.1 409.3,348.0 411.3,349.8 413.4,351.7 415.4,353.5 417.4,355.3 419.4,357.1 421.4,358.9 423.4,360.7 425.4,362.4 427.4,364.2 429.4,365.9 431.4,367.6 433.4,369.3 435.4,371.0 437.4,372.6 439.5,374.3 441.5,375.9 443.5,377.5 445.5,379.1 447.5,380.6 449.5,382.1 451.5,383.7 453.5,385.1 455.5,386.6 457.5,388.1 459.5,389.5 461.5,390.9 463.5,392.3 465.6,393.6 467.6,394.9 469.6,396.3 471.6,397.5 473.6,398.8 475.6,400.0 477.6,401.3 479.6,402.4 481.6,403.6 483.6,404.7 485.6,405.9 487.6,407.0 489.6,408.0 491.7,409.1 493.7,410.1 495.7,411.1 497.7,412.0 499.7,413.0 501.7,413.9 503.7,414.8 505.7,415.7 507.7,416.5 509.7,417.4 511.7,418.2 513.7,419.0 515.7,419.7 517.8,420.5 519.8,421.2 521.8,421.9 523.8,422.5 525.8,423.2 527.8,423.8 529.8,424.4 531.8,425.0 533.8,425.6 535.8,426.1 537.8,426.7 539.8,427.2 541.8,427.7 543.9,428.1 545.9,428.6 547.9,429.0 549.9,429.5 551.9,429.9 553.9,430.3 555.9,430.7 557.9,431.0 559.9,431.4 561.9,431.7 563.9,432.1 565.9,432.4 567.9,432.7 570.0,433.0 572.0,433.3 574.0,433.5 576.0,433.8 578.0,434.1 580.0,434.3 582.0,434.6 584.0,434.8 586.0,435.1 588.0,435.3 590.0,435.6 592.0,435.8 594.0,436.0 596.1,436.3 598.1,436.5 600.1,436.8 602.1,437.0 604.1,437.3 606.1,437.5 608.1,437.8" stroke="#20f0ff" stroke-width="1" fill="none" stroke-linejoin="round"/>
<polyline points="273.8,340.7 336.4,403.7 398.4,452.1 459.8,472.1 521.8,479.1" stroke="#20f0ff" stroke-width="1" fill="none" stroke-linejoin="round"/>
<polyline points="521.8,479.1 608.1,437.8 608.9,518.4 522.3,561.4 521.8,479.1" stroke="#20f0ff" stroke-width="1" fill="none" stroke-linejoin="round"/>
<polyline points="274.6,538.2 522.3,561.4" stroke="#20f0ff" stroke-width="1" fill="none" stroke-linejoin="round"/>
</svg>
<div class="a" style="left:701px;top:0;width:1px;height:706px;background:#000"></div>
<div class="a" style="left:702px;top:0;width:514px;height:86px;background:#353535"></div>
<div class="a" style="left:833px;top:0;width:255px;height:86px;background-color:#4a4a4a;
background-image:linear-gradient(90deg,#303030 1px,transparent 1px),linear-gradient(#303030 1px,transparent 1px),linear-gradient(90deg,#454545 1px,transparent 1px),linear-gradient(#454545 1px,transparent 1px);
background-size:32px 32px,32px 32px,8px 8px,8px 8px;background-position:31px 0,0 26px,7px 0,0 2px"></div>
<div class="a" style="left:702px;top:85px;width:514px;height:1px;background:#2c2c2c"></div>
<div class="a" style="left:702px;top:86px;width:514px;height:26px;background:#6b6b6b;border-top:1px solid #7b7b7b;box-sizing:border-box"></div>
<div class="a" style="left:702px;top:112px;width:514px;height:1px;background:#000"></div>
<div class="a" style="left:702px;top:113px;width:514px;height:25px;background:#6b6b6b;border-top:1px solid #7b7b7b;box-sizing:border-box"></div>
<div class="a" style="left:702px;top:138px;width:514px;height:1px;background:#585858"></div>
<div class="a" style="left:702px;top:139px;width:514px;height:1px;background:#858585"></div>
<div class="a" style="left:702px;top:140px;width:514px;height:566px;background:#727272"></div>
<div class="a" style="left:702px;top:0px;width:1px;height:85px;background:#4a4a4a"></div>
<div class="a" style="left:702px;top:140px;width:1px;height:566px;background:#808080"></div>
<div class="a" style="left:702px;top:87px;width:1px;height:25px;background:#7a7a7a"></div>
<div class="a" style="left:702px;top:114px;width:1px;height:24px;background:#7a7a7a"></div>
<div id="ui">
<div class="w " style="left:710px;top:90px;width:30px;height:20px;background:linear-gradient(#555555,#373737);border-radius:4px;"></div>
<div class="lbl" style="left:752px;top:95px;color:#000;">View</div>
<div class="lbl" style="left:797px;top:95px;color:#000;">Image</div>
<div class="w " style="left:841px;top:90px;width:32px;height:20px;background:linear-gradient(#555555,#373737);border-radius:4px 0 0 4px;"></div>
<div class="w " style="left:872px;top:90px;width:61px;height:20px;background:linear-gradient(#a8a8a8,#8a8a8a);border-radius:0;"><span style="position:absolute;left:27px;top:1px">New</span></div>
<div class="w " style="left:932px;top:90px;width:61px;height:20px;background:linear-gradient(#a8a8a8,#8a8a8a);border-radius:0 4px 4px 0;"><span style="position:absolute;left:25px;top:1px">Open</span></div>
<div class="w " style="left:998px;top:90px;width:20px;height:20px;background:linear-gradient(#a8a8a8,#8a8a8a);border-radius:4px;"></div>
<div class="w " style="left:1023px;top:90px;width:66px;height:20px;background:linear-gradient(#555555,#373737);border-radius:4px;"><span style="position:absolute;left:23px;top:1px;color:#fff">View</span></div>
<div class="w " style="left:1094px;top:90px;width:35px;height:20px;background:linear-gradient(#555555,#373737);border-radius:4px;"></div>
<div class="w " style="left:711px;top:116px;width:30px;height:20px;background:linear-gradient(#555555,#373737);border-radius:4px;"></div>
<div class="w " style="left:749px;top:116px;width:20px;height:20px;background:linear-gradient(#555555,#373737);border-radius:4px 0 0 4px;"></div>
<div class="w " style="left:768px;top:116px;width:21px;height:20px;background:linear-gradient(#555555,#373737);border-radius:0;"></div>
<div class="w " style="left:788px;top:116px;width:21px;height:20px;background:linear-gradient(#555555,#373737);border-radius:0;"></div>
<div class="w " style="left:808px;top:116px;width:21px;height:20px;background:linear-gradient(#555555,#373737);border-radius:0;"></div>
<div class="w " style="left:828px;top:116px;width:21px;height:20px;background:linear-gradient(#555555,#373737);border-radius:0;"></div>
<div class="w " style="left:848px;top:116px;width:21px;height:20px;background:linear-gradient(#555555,#373737);border-radius:0;"></div>
<div class="w " style="left:868px;top:116px;width:21px;height:20px;background:linear-gradient(#4a73b5,#6190d7);border-radius:0;"></div>
<div class="w " style="left:888px;top:116px;width:21px;height:20px;background:linear-gradient(#555555,#373737);border-radius:0;"></div>
<div class="w " style="left:908px;top:116px;width:21px;height:20px;background:linear-gradient(#555555,#373737);border-radius:0;"></div>
<div class="w " style="left:928px;top:116px;width:21px;height:20px;background:linear-gradient(#555555,#373737);border-radius:0;"></div>
<div class="w " style="left:948px;top:116px;width:21px;height:20px;background:linear-gradient(#555555,#373737);border-radius:0;"></div>
<div class="w " style="left:968px;top:116px;width:21px;height:20px;background:linear-gradient(#555555,#373737);border-radius:0 4px 4px 0;"></div>
<div class="lbl" style="left:793.5px;top:152px;color:#000;">Cube.002</div>
<div class="w " style="left:710px;top:183px;width:500px;height:20px;background:linear-gradient(#555555,#373737);border-radius:4px;"><span style="position:absolute;left:7px;top:1px;color:#fff">Add Modifier</span></div>
<div class="bx" style="left:710px;top:208px;width:500px;height:33px"></div>
<div class="w " style="left:771px;top:216px;width:238px;height:20px;background:linear-gradient(#999999,#b2b2b2);border-radius:4px;"><span style="position:absolute;left:7px;top:1px">Mirror</span></div>
<div class="w " style="left:1017px;top:216px;width:24px;height:20px;background:linear-gradient(#585858,#646464);border-radius:4px 0 0 4px;"></div>
<div class="w " style="left:1040px;top:216px;width:29px;height:20px;background:linear-gradient(#585858,#646464);border-radius:0;"></div>
<div class="w " style="left:1068px;top:216px;width:29px;height:20px;background:linear-gradient(#585858,#646464);border-radius:0;"></div>
<div class="w " style="left:1096px;top:216px;width:26px;height:20px;background:linear-gradient(#a8a8a8,#8a8a8a);border-radius:0 4px 4px 0;"></div>
<div class="w " style="left:1129px;top:216px;width:24px;height:20px;background:linear-gradient(#a8a8a8,#8a8a8a);border-radius:4px 0 0 4px;"></div>
<div class="w " style="left:1152px;top:216px;width:25px;height:20px;background:linear-gradient(#a8a8a8,#8a8a8a);border-radius:0 4px 4px 0;"></div>
<div class="bx" style="left:710px;top:246px;width:500px;height:124px"></div>
<div class="w " style="left:771px;top:254px;width:238px;height:20px;background:linear-gradient(#999999,#b2b2b2);border-radius:4px;"><span style="position:absolute;left:7px;top:1px">EdgeSplit</span></div>
<div class="w " style="left:1017px;top:254px;width:24px;height:20px;background:linear-gradient(#585858,#646464);border-radius:4px 0 0 4px;"></div>
<div class="w " style="left:1040px;top:254px;width:29px;height:20px;background:linear-gradient(#585858,#646464);border-radius:0;"></div>
<div class="w " style="left:1068px;top:254px;width:29px;height:20px;background:linear-gradient(#585858,#646464);border-radius:0;"></div>
<div class="w " style="left:1096px;top:254px;width:26px;height:20px;background:linear-gradient(#a8a8a8,#8a8a8a);border-radius:0 4px 4px 0;"></div>
<div class="w " style="left:1129px;top:254px;width:24px;height:20px;background:linear-gradient(#a8a8a8,#8a8a8a);border-radius:4px 0 0 4px;"></div>
<div class="w " style="left:1152px;top:254px;width:25px;height:20px;background:linear-gradient(#a8a8a8,#8a8a8a);border-radius:0 4px 4px 0;"></div>
<div class="a" style="left:711px;top:278px;width:498px;height:1px;background:#333"></div>
<div class="w c" style="left:715px;top:287px;width:241px;height:20px;background:linear-gradient(#a8a8a8,#8a8a8a);border-radius:4px;">Apply</div>
<div class="w c" style="left:964px;top:287px;width:241px;height:20px;background:linear-gradient(#a8a8a8,#8a8a8a);border-radius:4px;">Copy</div>
<div class="cb" style="left:718px;top:318px"></div>
<div class="lbl" style="left:740px;top:320px;color:#000;">Edge Angle</div>
<div class="w" style="left:715px;top:337px;width:241px;height:20px;border-radius:10px;background:linear-gradient(#8e8e8e,#9a9a9a);border-color:#4a4a4a"><span style="position:absolute;left:15px;top:1px;color:#555">Split Angle:</span><span style="position:absolute;right:15px;top:1px;color:#555">30°</span></div>
<div class="cb" style="left:967px;top:318px"></div>
<div class="lbl" style="left:988.5px;top:320px;color:#fff;">Sharp Edges</div>
<div class="bx" style="left:710px;top:375px;width:500px;height:168px"></div>
<div class="w " style="left:771px;top:383px;width:238px;height:20px;background:linear-gradient(#999999,#b2b2b2);border-radius:4px;"><span style="position:absolute;left:7px;top:1px">Subsurf</span></div>
<div class="w " style="left:1017px;top:383px;width:24px;height:20px;background:linear-gradient(#585858,#646464);border-radius:4px 0 0 4px;"></div>
<div class="w " style="left:1040px;top:383px;width:29px;height:20px;background:linear-gradient(#585858,#646464);border-radius:0;"></div>
<div class="w " style="left:1068px;top:383px;width:29px;height:20px;background:linear-gradient(#585858,#646464);border-radius:0;"></div>
<div class="w " style="left:1096px;top:383px;width:26px;height:20px;background:linear-gradient(#a8a8a8,#8a8a8a);border-radius:0 4px 4px 0;"></div>
<div class="w " style="left:1129px;top:383px;width:24px;height:20px;background:linear-gradient(#a8a8a8,#8a8a8a);border-radius:4px 0 0 4px;"></div>
<div class="w " style="left:1152px;top:383px;width:25px;height:20px;background:linear-gradient(#a8a8a8,#8a8a8a);border-radius:0 4px 4px 0;"></div>
<div class="a" style="left:711px;top:407px;width:498px;height:1px;background:#333"></div>
<div class="w c" style="left:715px;top:416px;width:241px;height:20px;background:linear-gradient(#a8a8a8,#8a8a8a);border-radius:4px;">Apply</div>
<div class="w c" style="left:964px;top:416px;width:241px;height:20px;background:linear-gradient(#a8a8a8,#8a8a8a);border-radius:4px;">Copy</div>
<div class="w c" style="left:715px;top:444px;width:245px;height:20px;background:linear-gradient(#4a73b5,#6190d7);border-radius:4px 0 0 4px;">Catmull-Clark</div>
<div class="w c" style="left:959px;top:444px;width:246px;height:20px;background:linear-gradient(#555555,#373737);border-radius:0 4px 4px 0;color:#fff">Simple</div>
<div class="lbl" style="left:722.5px;top:470.5px;color:#000;">Subdivisions:</div>
<div class="lbl" style="left:971.5px;top:470.5px;color:#000;">Options:</div>
<div class="w" style="left:715px;top:488px;width:241px;height:20px;border-radius:10px;background:linear-gradient(#a0a0a0,#b4b4b4)"><span style="position:absolute;left:15px;top:1px">View:</span><span style="position:absolute;right:15px;top:1px">2</span></div>
<div class="w" style="left:715px;top:510px;width:241px;height:20px;border-radius:10px;background:linear-gradient(#a0a0a0,#b4b4b4)"><span style="position:absolute;left:15px;top:1px">Render:</span><span style="position:absolute;right:15px;top:1px">2</span></div>
<div class="cb" style="left:967px;top:491px"></div>
<div class="lbl" style="left:988.5px;top:493px;color:#fff;">Subdivide UVs</div>
<div class="cb" style="left:967px;top:513px"></div>
<div class="lbl" style="left:988.5px;top:515px;color:#fff;">Optimal Display</div>
<svg class="a" style="left:0;top:0" width="1216" height="706">
<g transform="translate(714,93)"><rect x="0" y="0" width="16" height="14" rx="1" fill="#111"/>
<rect x="1" y="1" width="14" height="4.5" fill="#dc9a94"/>
<rect x="1" y="1" width="14" height="1.2" fill="#e8b0b0"/>
<rect x="9.6" y="2" width="2.4" height="2.4" fill="#fff"/>
<path d="M1,5.5 L1.6,4.4 L2.6,5 L3.4,4.3 L4.2,5.2 L10.5,5.3 L11.3,4.6 L12.5,5.1 L15,5 L15,6.8 L1,6.8Z" fill="#000"/>
<rect x="1" y="6.8" width="14" height="2.4" fill="#9088c4"/>
<rect x="9" y="7" width="2.4" height="2" fill="#b4aee0"/>
<rect x="1" y="9.2" width="14" height="0.8" fill="#1a1428"/>
<rect x="1" y="10" width="14" height="3" fill="#f8f8f8"/>
<circle cx="3" cy="11.5" r="1" fill="#e00"/>
<rect x="5" y="11" width="9" height="1" fill="#9a9a9a"/></g>
<g transform="translate(731,93.5)"><path d="M3,0.5 L5.8,5.5 L0.2,5.5Z M0.2,7.5 L5.8,7.5 L3,12.5Z" fill="#a0a0a0"/></g>
<g transform="translate(846,92)"><path d="M3,0 L14,0 L14,16 L0,16 L0,3Z" fill="#111"/>
<path d="M3.5,1 L13,1 L13,15 L1,15 L1,3.5Z" fill="#fff"/>
<rect x="2.5" y="2" width="9.5" height="6" fill="#dca09c"/>
<path d="M1,3.5 L3.5,1 L3.5,3.5Z" fill="#fff"/>
<rect x="7.5" y="3.2" width="2" height="2" fill="#fff"/>
<path d="M2,8 L4,7.3 L6,8 L9,7.5 L12,8 L12,9.5 L2,9.5Z" fill="#000"/>
<rect x="2" y="9.5" width="10" height="4.5" fill="#a4a0d4"/></g>
<g transform="translate(863.5,93.5)"><path d="M3,0.5 L5.8,5.5 L0.2,5.5Z M0.2,7.5 L5.8,7.5 L3,12.5Z" fill="#a0a0a0"/></g>
<g transform="translate(878,94)"><path d="M4.5,0.5 H7.5 V4.5 H11.5 V7.5 H7.5 V11.5 H4.5 V7.5 H0.5 V4.5 H4.5Z" fill="#fff" stroke="#222" stroke-width="1"/></g>
<g transform="translate(936,93)"><path d="M0.5,2.5 H4.5 L5.5,3.5 H8 V12.5 H0.5Z" fill="#c8bc88" stroke="#3a3420" stroke-width="1"/>
<rect x="6.5" y="0.5" width="7" height="6" fill="#f4f4f4" stroke="#222" stroke-width="1"/>
<rect x="8" y="2" width="4" height="1" fill="#777"/><rect x="8" y="4" width="4" height="1" fill="#777"/>
<path d="M2.5,6.5 H15.5 V13.5 H0.5 V8.5Z" fill="#e0d49e" stroke="#3a3420" stroke-width="1"/></g>
<g transform="translate(1000,92)"><g transform="scale(1.0)">
<path d="M1.2,14.8 L6.5,9.5" stroke="#1a1a1a" stroke-width="3" stroke-linecap="round"/>
<path d="M1.5,14.5 L6.5,9.5" stroke="#d8d8d8" stroke-width="1.3" stroke-linecap="round"/>
<path d="M3.5,7.2 L8.8,12.5 L9.8,11.3 L9.2,8.8 L12.2,5.8 L13.6,6.4 L15,5 L11,1 L9.6,2.4 L10.2,3.8 L7.2,6.8 L4.7,6.2Z" fill="#ececec" stroke="#111" stroke-width="1" stroke-linejoin="round"/>
<path d="M5.5,7.5 L8.5,10.5" stroke="#888" stroke-width="1"/><path d="M10.2,4.2 L12,6" stroke="#aaa" stroke-width="0.8"/></g></g>
<g transform="translate(1028,92)"><path d="M3,0 L14,0 L14,16 L0,16 L0,3Z" fill="#111"/>
<path d="M3.5,1 L13,1 L13,15 L1,15 L1,3.5Z" fill="#fff"/>
<rect x="2.5" y="2" width="9.5" height="6" fill="#dca09c"/>
<path d="M1,3.5 L3.5,1 L3.5,3.5Z" fill="#fff"/>
<rect x="7.5" y="3.2" width="2" height="2" fill="#fff"/>
<path d="M2,8 L4,7.3 L6,8 L9,7.5 L12,8 L12,9.5 L2,9.5Z" fill="#000"/>
<rect x="2" y="9.5" width="10" height="4.5" fill="#a4a0d4"/></g>
<g transform="translate(1080,93.5)"><path d="M3,0.5 L5.8,5.5 L0.2,5.5Z M0.2,7.5 L5.8,7.5 L3,12.5Z" fill="#a0a0a0"/></g>
<g transform="translate(1098,92)"><path d="M1,5 V1 H5 M11,1 H15 V5 M15,11 V15 H11 M5,15 H1 V11" stroke="#111" stroke-width="2.6" fill="none"/>
<path d="M1.5,4.5 V1.5 H4.5 M11.5,1.5 H14.5 V4.5 M14.5,11.5 V14.5 H11.5 M4.5,14.5 H1.5 V11.5" stroke="#fff" stroke-width="1.2" fill="none"/>
<circle cx="8" cy="8" r="3.6" fill="#6a6a6a"/>
<rect x="5.8" y="5.8" width="4.4" height="4.4" fill="#fff"/>
<rect x="6.8" y="6.8" width="2.4" height="2.4" fill="#1a5ee6"/></g>
<g transform="translate(1120,93.5)"><path d="M3,0.5 L5.8,5.5 L0.2,5.5Z M0.2,7.5 L5.8,7.5 L3,12.5Z" fill="#a0a0a0"/></g>
<g transform="translate(716,119.5)"><rect x="0.5" y="0.5" width="13" height="5" rx="2.5" fill="#3a3a3a" stroke="#111"/>
<rect x="8" y="1" width="5.2" height="4" rx="2" fill="#e0e0e0"/>
<rect x="0.5" y="7.5" width="13" height="5" rx="2.5" fill="#fff" stroke="#111"/>
<path d="M2,10 L3.5,8.6 V11.4Z M12,10 L10.5,8.6 V11.4Z" fill="#111"/></g>
<g transform="translate(731.5,119.5)"><path d="M3,0.5 L5.8,5.5 L0.2,5.5Z M0.2,7.5 L5.8,7.5 L3,12.5Z" fill="#a0a0a0"/></g>
<g transform="translate(750.5,119)"><rect x="1.3" y="0.6" width="3" height="2" rx="1" fill="#e8e8e8" stroke="#222" stroke-width="0.7"/>
<rect x="0.5" y="2.5" width="14" height="10" rx="0.8" fill="#b4b4b4" stroke="#151515" stroke-width="1"/>
<rect x="1" y="3" width="13" height="2.6" fill="#d4d4d4"/>
<rect x="1.5" y="6" width="3.5" height="5.8" fill="#2e2e2e"/>
<circle cx="4.3" cy="4.3" r="0.8" fill="#e01010"/>
<rect x="11.6" y="3.5" width="1.8" height="1.4" fill="#1a2030"/>
<circle cx="9.2" cy="8.6" r="3.7" fill="#c0c0c0" stroke="#333" stroke-width="0.6"/>
<circle cx="9.2" cy="8.6" r="2.6" fill="#3a2220"/>
<path d="M7,8 A2.4,2.4 0 0 1 9.5,6.1 L9.2,8.6Z" fill="#3a5a8a"/></g>
<g transform="translate(770,118)"><path d="M4,6 L14,8 L13,15 L3,13Z" fill="#d8d0b0" stroke="#222" stroke-width="0.8"/>
<rect x="0.5" y="0.5" width="10" height="10" fill="#ddd" stroke="#222" stroke-width="1"/>
<rect x="1.5" y="1.5" width="8" height="8" fill="#9aa0a8"/>
<rect x="5.5" y="2" width="3" height="6" rx="1" fill="#4a78c8" stroke="#123" stroke-width="0.6"/>
<circle cx="4" cy="8" r="2" fill="#ccc" stroke="#222" stroke-width="0.6"/>
<circle cx="2.5" cy="2.5" r="1" fill="#e8c040"/></g>
<g transform="translate(791,119)"><circle cx="2.6" cy="2.6" r="2.4" fill="#c8c860" opacity="0.55"/><circle cx="2.6" cy="2.6" r="1.3" fill="#ffffd0"/>
<path d="M6.5,2.5 A3,1.5 0 0 1 12.5,2.5 L12.5,10 A3,1.5 0 0 1 6.5,10Z" fill="#3a6cc8" stroke="#101a30" stroke-width="1"/>
<rect x="7.6" y="3.5" width="2" height="6.5" fill="#a8c8f8"/>
<circle cx="4.6" cy="10.6" r="3.5" fill="#d8d8d8" stroke="#111" stroke-width="1"/>
<circle cx="3.9" cy="9.8" r="1.5" fill="#fafafa"/></g>
<g transform="translate(811,119)"><circle cx="7" cy="7" r="6.5" fill="#6c8cb8" stroke="#1a2a3a" stroke-width="1"/>
<path d="M2.5,4 Q5,1.5 8,2.5 L7,5 L4,6 L3,9 Z M9,6 L12.5,5.5 L12.8,8.5 L10,10 Z M5,10.5 L8,11 L7,13 Z" fill="#4a6a2a"/>
<circle cx="5" cy="4.5" r="3" fill="#fff" opacity="0.25"/></g>
<g transform="translate(831.5,119)"><path d="M7,0.5 L13.2,3.5 L13.2,10.5 L7,13.5 L0.8,10.5 L0.8,3.5Z" fill="#2a1a08"/>
<path d="M7,1.5 L12.3,4 L7,6.5 L1.7,4Z" fill="#f0d8b0"/>
<path d="M1.7,4.5 L6.5,7 L6.5,12.5 L1.7,10Z" fill="#c89050"/>
<path d="M7.5,7 L12.3,4.5 L12.3,10 L7.5,12.5Z" fill="#a87038"/></g>
<g transform="translate(850.5,119)"><rect x="0" y="0" width="9.5" height="5.6" rx="2.8" transform="translate(1.2,9.3) rotate(-45)" fill="none" stroke="#222" stroke-width="3.2"/><rect x="0" y="0" width="9.5" height="5.6" rx="2.8" transform="translate(5.8,4.7) rotate(-45)" fill="none" stroke="#222" stroke-width="3.2"/><rect x="0" y="0" width="9.5" height="5.6" rx="2.8" transform="translate(1.2,9.3) rotate(-45)" fill="none" stroke="#d4d4d4" stroke-width="1.4"/><rect x="0" y="0" width="9.5" height="5.6" rx="2.8" transform="translate(5.8,4.7) rotate(-45)" fill="none" stroke="#d4d4d4" stroke-width="1.4"/></g>
<g transform="translate(870.5,119)"><path d="M1.5,13.5 L8,7 M8,7 C6.8,4.5 8.5,1.2 11.8,1.5 L9.8,3.5 L10.5,5.5 L12.5,6.2 L14.5,4.2 C14.8,7.5 11.5,9.2 9,8" stroke="#111" stroke-width="3.4" fill="none" stroke-linecap="round" stroke-linejoin="round"/>
<path d="M1.5,13.5 L8,7 M8,7 C6.8,4.5 8.5,1.2 11.8,1.5 L9.8,3.5 L10.5,5.5 L12.5,6.2 L14.5,4.2 C14.8,7.5 11.5,9.2 9,8" stroke="#f4f4f4" stroke-width="1.6" fill="none" stroke-linecap="round" stroke-linejoin="round"/></g>
<g transform="translate(891,120)"><path d="M1.5,1.5 L12.5,1.5 L7,11.5Z" fill="none" stroke="#ddd" stroke-width="1"/>
<circle cx="1.5" cy="1.5" r="1.5" fill="#fff" stroke="#111" stroke-width="1"/>
<circle cx="12.5" cy="1.5" r="1.5" fill="#fff" stroke="#111" stroke-width="1"/>
<circle cx="7" cy="11.5" r="1.5" fill="#fff" stroke="#111" stroke-width="1"/></g>
<g transform="translate(911.5,119.5)"><circle cx="6.5" cy="6.5" r="6.2" fill="#222"/>
<path d="M6.5,0.8 A5.7,5.7 0 0 0 0.8,6.5 L6.5,6.5Z" fill="#d8d8d8"/>
<path d="M6.5,0.8 A5.7,5.7 0 0 1 12.2,6.5 L6.5,6.5Z" fill="#8a8a8a"/>
<path d="M0.8,6.5 A5.7,5.7 0 0 0 6.5,12.2 L6.5,6.5Z" fill="#8a6a6a"/>
<path d="M12.2,6.5 A5.7,5.7 0 0 1 6.5,12.2 L6.5,6.5Z" fill="#c89a8a"/></g>
<g transform="translate(931.5,119.5)"><rect x="0" y="0" width="13" height="13" fill="#222"/><rect x="1" y="1" width="11" height="11" fill="#e8e8e8"/><rect x="1.0" y="1.0" width="2.2" height="2.2" fill="#8a1a1a"/><rect x="1.0" y="5.4" width="2.2" height="2.2" fill="#8a1a1a"/><rect x="1.0" y="9.8" width="2.2" height="2.2" fill="#8a1a1a"/><rect x="3.2" y="3.2" width="2.2" height="2.2" fill="#8a1a1a"/><rect x="3.2" y="7.6" width="2.2" height="2.2" fill="#8a1a1a"/><rect x="5.4" y="1.0" width="2.2" height="2.2" fill="#8a1a1a"/><rect x="5.4" y="5.4" width="2.2" height="2.2" fill="#8a1a1a"/><rect x="5.4" y="9.8" width="2.2" height="2.2" fill="#8a1a1a"/><rect x="7.6" y="3.2" width="2.2" height="2.2" fill="#8a1a1a"/><rect x="7.6" y="7.6" width="2.2" height="2.2" fill="#8a1a1a"/><rect x="9.8" y="1.0" width="2.2" height="2.2" fill="#8a1a1a"/><rect x="9.8" y="5.4" width="2.2" height="2.2" fill="#8a1a1a"/><rect x="9.8" y="9.8" width="2.2" height="2.2" fill="#8a1a1a"/></g>
<g transform="translate(950.5,118.5)"><path d="M3.5,0.0 L4.27,2.73 L7.0,3.5 L4.27,4.27 L3.5,7.0 L2.73,4.27 L0.0,3.5 L2.73,2.73Z" fill="#fff" stroke="#a89040" stroke-width="0.8"/><path d="M11,1.0 L11.77,3.73 L14.5,4.5 L11.77,5.27 L11,8.0 L10.23,5.27 L7.5,4.5 L10.23,3.73Z" fill="#fff" stroke="#a89040" stroke-width="0.8"/><path d="M5,6.0 L5.99,9.51 L9.5,10.5 L5.99,11.49 L5,15.0 L4.01,11.49 L0.5,10.5 L4.01,9.51Z" fill="#fff" stroke="#a89040" stroke-width="0.8"/><path d="M12,9 L12.66,11.34 L15,12 L12.66,12.66 L12,15 L11.34,12.66 L9,12 L11.34,11.34Z" fill="#fff" stroke="#a89040" stroke-width="0.8"/></g>
<g transform="translate(971,118.5)"><path d="M1,5 L6,12 L11,6" stroke="#1a2030" stroke-width="3.2" fill="none"/>
<path d="M1.5,5.5 L6,11 L10.5,6.5" stroke="#6a88c0" stroke-width="1.6" fill="none"/>
<circle cx="11" cy="3.8" r="3.4" fill="#c8c8c8" stroke="#111" stroke-width="1"/>
<circle cx="10.3" cy="3" r="1.2" fill="#eee"/></g>
<g transform="translate(712,149)"><g transform="scale(1.0)">
<path d="M1.2,14.8 L6.5,9.5" stroke="#1a1a1a" stroke-width="3" stroke-linecap="round"/>
<path d="M1.5,14.5 L6.5,9.5" stroke="#d8d8d8" stroke-width="1.3" stroke-linecap="round"/>
<path d="M3.5,7.2 L8.8,12.5 L9.8,11.3 L9.2,8.8 L12.2,5.8 L13.6,6.4 L15,5 L11,1 L9.6,2.4 L10.2,3.8 L7.2,6.8 L4.7,6.2Z" fill="#ececec" stroke="#111" stroke-width="1" stroke-linejoin="round"/>
<path d="M5.5,7.5 L8.5,10.5" stroke="#888" stroke-width="1"/><path d="M10.2,4.2 L12,6" stroke="#aaa" stroke-width="0.8"/></g></g>
<g transform="translate(735,149.5)"><circle cx="2.6" cy="2.6" r="2.4" fill="#c8c860" opacity="0.55"/><circle cx="2.6" cy="2.6" r="1.3" fill="#ffffd0"/>
<path d="M6.5,2.5 A3,1.5 0 0 1 12.5,2.5 L12.5,10 A3,1.5 0 0 1 6.5,10Z" fill="#3a6cc8" stroke="#101a30" stroke-width="1"/>
<rect x="7.6" y="3.5" width="2" height="6.5" fill="#a8c8f8"/>
<circle cx="4.6" cy="10.6" r="3.5" fill="#d8d8d8" stroke="#111" stroke-width="1"/>
<circle cx="3.9" cy="9.8" r="1.5" fill="#fafafa"/></g>
<g transform="translate(756,154)"><path d="M0,0 L3.5,3 L0,6Z" fill="#222"/></g>
<g transform="translate(776,150)"><path d="M7,0.5 L13.2,3.5 L13.2,10.5 L7,13.5 L0.8,10.5 L0.8,3.5Z" fill="#2a1a08"/>
<path d="M7,1.5 L12.3,4 L7,6.5 L1.7,4Z" fill="#f0d8b0"/>
<path d="M1.7,4.5 L6.5,7 L6.5,12.5 L1.7,10Z" fill="#c89050"/>
<path d="M7.5,7 L12.3,4.5 L12.3,10 L7.5,12.5Z" fill="#a87038"/></g>
<g transform="translate(1200.5,186)"><path d="M3,0.5 L5.8,5.5 L0.2,5.5Z M0.2,7.5 L5.8,7.5 L3,12.5Z" fill="#9a9a9a"/></g>
<g transform="translate(1021,219)"><rect x="1.3" y="0.6" width="3" height="2" rx="1" fill="#e8e8e8" stroke="#222" stroke-width="0.7"/>
<rect x="0.5" y="2.5" width="14" height="10" rx="0.8" fill="#b4b4b4" stroke="#151515" stroke-width="1"/>
<rect x="1" y="3" width="13" height="2.6" fill="#d4d4d4"/>
<rect x="1.5" y="6" width="3.5" height="5.8" fill="#2e2e2e"/>
<circle cx="4.3" cy="4.3" r="0.8" fill="#e01010"/>
<rect x="11.6" y="3.5" width="1.8" height="1.4" fill="#1a2030"/>
<circle cx="9.2" cy="8.6" r="3.7" fill="#c0c0c0" stroke="#333" stroke-width="0.6"/>
<circle cx="9.2" cy="8.6" r="2.6" fill="#3a2220"/>
<path d="M7,8 A2.4,2.4 0 0 1 9.5,6.1 L9.2,8.6Z" fill="#3a5a8a"/></g>
<g transform="translate(1047.5,221.5)"><path d="M0.3,3.8 C3,-0.8 10,-0.8 12.7,3.8 C10,8.4 3,8.4 0.3,3.8Z" fill="#f4f4f4" stroke="#1a1a1a" stroke-width="0.9"/>
<circle cx="6.5" cy="3.6" r="2.2" fill="#2a2a2a"/><circle cx="5.8" cy="2.9" r="0.7" fill="#e8e8e8"/></g>
<g transform="translate(1074.5,219)"><path d="M5,1.8 L9.8,0.3 L14,1.8 L14,11.6 L9.8,13.8 L5,12.3Z" fill="#cfcfcf" stroke="#6a6a6a" stroke-width="0.7"/>
<path d="M10.5,1 L14,2 L14,11.5 L10.5,13.3Z" fill="#9c9c9c"/>
<path d="M2.4,1.9 L2.4,9.8 L8.6,12 M2.4,1.9 L8.6,3.9 L8.6,12" stroke="#3a2a10" stroke-width="0.7" fill="none"/><rect x="0.5999999999999999" y="0.09999999999999987" width="3.6" height="3.6" fill="#f0a040" stroke="#3a1800" stroke-width="0.9"/><rect x="1.7" y="1.2" width="1.4" height="1.4" fill="#fff4e0"/><rect x="6.8" y="2.0999999999999996" width="3.6" height="3.6" fill="#f0a040" stroke="#3a1800" stroke-width="0.9"/><rect x="7.8999999999999995" y="3.2" width="1.4" height="1.4" fill="#fff4e0"/><rect x="0.5999999999999999" y="8.0" width="3.6" height="3.6" fill="#f0a040" stroke="#3a1800" stroke-width="0.9"/><rect x="1.7" y="9.100000000000001" width="1.4" height="1.4" fill="#fff4e0"/><rect x="6.8" y="10.2" width="3.6" height="3.6" fill="#f0a040" stroke="#3a1800" stroke-width="0.9"/><rect x="7.8999999999999995" y="11.3" width="1.4" height="1.4" fill="#fff4e0"/></g>
<g transform="translate(1101,219.5)"><path d="M1.8,1.8 L12.2,1.8 L7,12Z" fill="none" stroke="#1a1a1a" stroke-width="1.6"/>
<path d="M1.8,1.8 L12.2,1.8 L7,12Z" fill="none" stroke="#d8d8d8" stroke-width="0.6"/>
<circle cx="1.8" cy="1.8" r="1.9" fill="#fff" stroke="#000" stroke-width="1"/>
<circle cx="12.2" cy="1.8" r="1.9" fill="#fff" stroke="#000" stroke-width="1"/>
<circle cx="7" cy="12" r="1.9" fill="#fff" stroke="#000" stroke-width="1"/></g>
<g transform="translate(1135,222)"><path d="M6,0.5 L11.5,6.5 L0.5,6.5Z" fill="#f2f2f2" stroke="#222" stroke-width="0.9" stroke-linejoin="round"/></g>
<g transform="translate(1158,223)"><path d="M0.5,0.5 L11.5,0.5 L6,6.5Z" fill="#f2f2f2" stroke="#222" stroke-width="0.9" stroke-linejoin="round"/></g>
<g transform="translate(1189,220.5)"><path d="M2.2,2.2 L9.8,9.8 M9.8,2.2 L2.2,9.8" stroke="#111" stroke-width="3.8" stroke-linecap="square"/><path d="M2.2,2.2 L9.8,9.8 M9.8,2.2 L2.2,9.8" stroke="#f4f4f4" stroke-width="2" stroke-linecap="square"/></g>
<g transform="translate(722,221)"><path d="M0.5,0.5 L6.5,5.5 L0.5,10.5Z" fill="#f2f2f2" stroke="#222" stroke-width="0.9" stroke-linejoin="round"/></g>
<g transform="translate(746.5,217.5)"><path d="M7.5,0.8 L15.5,3.5 L15.5,16 L7.5,12.5Z" fill="#7aa4e4" stroke="#1a3a6a" stroke-width="0.9"/>
<circle cx="12.5" cy="7.5" r="2.8" fill="#c8dcf6"/>
<circle cx="5" cy="12" r="4" fill="#e8e8e8" stroke="#111" stroke-width="0.9"/>
<circle cx="4.2" cy="11" r="2" fill="#fff"/></g>
<g transform="translate(1021,257)"><rect x="1.3" y="0.6" width="3" height="2" rx="1" fill="#e8e8e8" stroke="#222" stroke-width="0.7"/>
<rect x="0.5" y="2.5" width="14" height="10" rx="0.8" fill="#b4b4b4" stroke="#151515" stroke-width="1"/>
<rect x="1" y="3" width="13" height="2.6" fill="#d4d4d4"/>
<rect x="1.5" y="6" width="3.5" height="5.8" fill="#2e2e2e"/>
<circle cx="4.3" cy="4.3" r="0.8" fill="#e01010"/>
<rect x="11.6" y="3.5" width="1.8" height="1.4" fill="#1a2030"/>
<circle cx="9.2" cy="8.6" r="3.7" fill="#c0c0c0" stroke="#333" stroke-width="0.6"/>
<circle cx="9.2" cy="8.6" r="2.6" fill="#3a2220"/>
<path d="M7,8 A2.4,2.4 0 0 1 9.5,6.1 L9.2,8.6Z" fill="#3a5a8a"/></g>
<g transform="translate(1047.5,259.5)"><path d="M0.3,3.8 C3,-0.8 10,-0.8 12.7,3.8 C10,8.4 3,8.4 0.3,3.8Z" fill="#f4f4f4" stroke="#1a1a1a" stroke-width="0.9"/>
<circle cx="6.5" cy="3.6" r="2.2" fill="#2a2a2a"/><circle cx="5.8" cy="2.9" r="0.7" fill="#e8e8e8"/></g>
<g transform="translate(1074.5,257)"><path d="M5,1.8 L9.8,0.3 L14,1.8 L14,11.6 L9.8,13.8 L5,12.3Z" fill="#cfcfcf" stroke="#6a6a6a" stroke-width="0.7"/>
<path d="M10.5,1 L14,2 L14,11.5 L10.5,13.3Z" fill="#9c9c9c"/>
<path d="M2.4,1.9 L2.4,9.8 L8.6,12 M2.4,1.9 L8.6,3.9 L8.6,12" stroke="#3a2a10" stroke-width="0.7" fill="none"/><rect x="0.5999999999999999" y="0.09999999999999987" width="3.6" height="3.6" fill="#f0a040" stroke="#3a1800" stroke-width="0.9"/><rect x="1.7" y="1.2" width="1.4" height="1.4" fill="#fff4e0"/><rect x="6.8" y="2.0999999999999996" width="3.6" height="3.6" fill="#f0a040" stroke="#3a1800" stroke-width="0.9"/><rect x="7.8999999999999995" y="3.2" width="1.4" height="1.4" fill="#fff4e0"/><rect x="0.5999999999999999" y="8.0" width="3.6" height="3.6" fill="#f0a040" stroke="#3a1800" stroke-width="0.9"/><rect x="1.7" y="9.100000000000001" width="1.4" height="1.4" fill="#fff4e0"/><rect x="6.8" y="10.2" width="3.6" height="3.6" fill="#f0a040" stroke="#3a1800" stroke-width="0.9"/><rect x="7.8999999999999995" y="11.3" width="1.4" height="1.4" fill="#fff4e0"/></g>
<g transform="translate(1101,257.5)"><path d="M1.8,1.8 L12.2,1.8 L7,12Z" fill="none" stroke="#1a1a1a" stroke-width="1.6"/>
<path d="M1.8,1.8 L12.2,1.8 L7,12Z" fill="none" stroke="#d8d8d8" stroke-width="0.6"/>
<circle cx="1.8" cy="1.8" r="1.9" fill="#fff" stroke="#000" stroke-width="1"/>
<circle cx="12.2" cy="1.8" r="1.9" fill="#fff" stroke="#000" stroke-width="1"/>
<circle cx="7" cy="12" r="1.9" fill="#fff" stroke="#000" stroke-width="1"/></g>
<g transform="translate(1135,260)"><path d="M6,0.5 L11.5,6.5 L0.5,6.5Z" fill="#f2f2f2" stroke="#222" stroke-width="0.9" stroke-linejoin="round"/></g>
<g transform="translate(1158,261)"><path d="M0.5,0.5 L11.5,0.5 L6,6.5Z" fill="#f2f2f2" stroke="#222" stroke-width="0.9" stroke-linejoin="round"/></g>
<g transform="translate(1189,258.5)"><path d="M2.2,2.2 L9.8,9.8 M9.8,2.2 L2.2,9.8" stroke="#111" stroke-width="3.8" stroke-linecap="square"/><path d="M2.2,2.2 L9.8,9.8 M9.8,2.2 L2.2,9.8" stroke="#f4f4f4" stroke-width="2" stroke-linecap="square"/></g>
<g transform="translate(720,261)"><path d="M0.5,0.5 L11.5,0.5 L6,6.5Z" fill="#f2f2f2" stroke="#222" stroke-width="0.9" stroke-linejoin="round"/></g>
<g transform="translate(748.5,257.5)"><path d="M6.5,0.5 L12.5,3.2 L12.5,10 L6.5,13 L0.5,10 L0.5,3.2Z" fill="#4a7ed8" stroke="#0e1a3a" stroke-width="0.9"/>
<path d="M6.5,1.4 L11.6,3.6 L6.5,6 L1.4,3.6Z" fill="#cfe0fa"/>
<path d="M1.4,4.2 L6,6.5 L6,12 L1.4,9.6Z" fill="#9cc0f4"/>
<path d="M7,6.5 L11.6,4.2 L11.6,9.6 L7,12Z" fill="#3a6ad0"/>
<path d="M10.5,5.5 L7.5,7 L7.5,10 L10.5,8.5" stroke="#e8f0ff" stroke-width="0.9" fill="none"/></g>
<g transform="translate(721,343.5)"><path d="M3.5,0 L0,3.5 L3.5,7Z" fill="#8a8a8a"/></g>
<g transform="translate(946,343.5)"><path d="M0,0 L3.5,3.5 L0,7Z" fill="#8a8a8a"/></g>
<g transform="translate(969,319.5)"><path d="M1,5 L4,8 L10,0.5" stroke="#222" stroke-width="2.8" fill="none"/><path d="M1.5,5 L4,7.3 L9.7,0.8" stroke="#f0f0f0" stroke-width="1.6" fill="none"/></g>
<g transform="translate(1021,386)"><rect x="1.3" y="0.6" width="3" height="2" rx="1" fill="#e8e8e8" stroke="#222" stroke-width="0.7"/>
<rect x="0.5" y="2.5" width="14" height="10" rx="0.8" fill="#b4b4b4" stroke="#151515" stroke-width="1"/>
<rect x="1" y="3" width="13" height="2.6" fill="#d4d4d4"/>
<rect x="1.5" y="6" width="3.5" height="5.8" fill="#2e2e2e"/>
<circle cx="4.3" cy="4.3" r="0.8" fill="#e01010"/>
<rect x="11.6" y="3.5" width="1.8" height="1.4" fill="#1a2030"/>
<circle cx="9.2" cy="8.6" r="3.7" fill="#c0c0c0" stroke="#333" stroke-width="0.6"/>
<circle cx="9.2" cy="8.6" r="2.6" fill="#3a2220"/>
<path d="M7,8 A2.4,2.4 0 0 1 9.5,6.1 L9.2,8.6Z" fill="#3a5a8a"/></g>
<g transform="translate(1047.5,388.5)"><path d="M0.3,3.8 C3,-0.8 10,-0.8 12.7,3.8 C10,8.4 3,8.4 0.3,3.8Z" fill="#f4f4f4" stroke="#1a1a1a" stroke-width="0.9"/>
<circle cx="6.5" cy="3.6" r="2.2" fill="#2a2a2a"/><circle cx="5.8" cy="2.9" r="0.7" fill="#e8e8e8"/></g>
<g transform="translate(1074.5,386)"><path d="M5,1.8 L9.8,0.3 L14,1.8 L14,11.6 L9.8,13.8 L5,12.3Z" fill="#cfcfcf" stroke="#6a6a6a" stroke-width="0.7"/>
<path d="M10.5,1 L14,2 L14,11.5 L10.5,13.3Z" fill="#9c9c9c"/>
<path d="M2.4,1.9 L2.4,9.8 L8.6,12 M2.4,1.9 L8.6,3.9 L8.6,12" stroke="#3a2a10" stroke-width="0.7" fill="none"/><rect x="0.5999999999999999" y="0.09999999999999987" width="3.6" height="3.6" fill="#f0a040" stroke="#3a1800" stroke-width="0.9"/><rect x="1.7" y="1.2" width="1.4" height="1.4" fill="#fff4e0"/><rect x="6.8" y="2.0999999999999996" width="3.6" height="3.6" fill="#f0a040" stroke="#3a1800" stroke-width="0.9"/><rect x="7.8999999999999995" y="3.2" width="1.4" height="1.4" fill="#fff4e0"/><rect x="0.5999999999999999" y="8.0" width="3.6" height="3.6" fill="#f0a040" stroke="#3a1800" stroke-width="0.9"/><rect x="1.7" y="9.100000000000001" width="1.4" height="1.4" fill="#fff4e0"/><rect x="6.8" y="10.2" width="3.6" height="3.6" fill="#f0a040" stroke="#3a1800" stroke-width="0.9"/><rect x="7.8999999999999995" y="11.3" width="1.4" height="1.4" fill="#fff4e0"/></g>
<g transform="translate(1101,386.5)"><path d="M1.8,1.8 L12.2,1.8 L7,12Z" fill="none" stroke="#1a1a1a" stroke-width="1.6"/>
<path d="M1.8,1.8 L12.2,1.8 L7,12Z" fill="none" stroke="#d8d8d8" stroke-width="0.6"/>
<circle cx="1.8" cy="1.8" r="1.9" fill="#fff" stroke="#000" stroke-width="1"/>
<circle cx="12.2" cy="1.8" r="1.9" fill="#fff" stroke="#000" stroke-width="1"/>
<circle cx="7" cy="12" r="1.9" fill="#fff" stroke="#000" stroke-width="1"/></g>
<g transform="translate(1135,389)"><path d="M6,0.5 L11.5,6.5 L0.5,6.5Z" fill="#f2f2f2" stroke="#222" stroke-width="0.9" stroke-linejoin="round"/></g>
<g transform="translate(1158,390)"><path d="M0.5,0.5 L11.5,0.5 L6,6.5Z" fill="#f2f2f2" stroke="#222" stroke-width="0.9" stroke-linejoin="round"/></g>
<g transform="translate(1189,387.5)"><path d="M2.2,2.2 L9.8,9.8 M9.8,2.2 L2.2,9.8" stroke="#111" stroke-width="3.8" stroke-linecap="square"/><path d="M2.2,2.2 L9.8,9.8 M9.8,2.2 L2.2,9.8" stroke="#f4f4f4" stroke-width="2" stroke-linecap="square"/></g>
<g transform="translate(720,390)"><path d="M0.5,0.5 L11.5,0.5 L6,6.5Z" fill="#f2f2f2" stroke="#222" stroke-width="0.9" stroke-linejoin="round"/></g>
<g transform="translate(748,384.5)"><path d="M7,0.5 L13,3.8 L13,11.2 L7,14.5 L1,11.2 L1,3.8Z" fill="#5a5a5a" stroke="#444" stroke-width="0.8"/>
<circle cx="7" cy="7.5" r="4.6" fill="#1a2a5a"/>
<circle cx="7" cy="7.5" r="3.8" fill="#3a6ad8"/>
<circle cx="6" cy="6.3" r="1.8" fill="#a8c8ff"/></g>
<g transform="translate(721,494.5)"><path d="M3.5,0 L0,3.5 L3.5,7Z" fill="#6a6a6a"/></g>
<g transform="translate(946,494.5)"><path d="M0,0 L3.5,3.5 L0,7Z" fill="#6a6a6a"/></g>
<g transform="translate(721,516.5)"><path d="M3.5,0 L0,3.5 L3.5,7Z" fill="#6a6a6a"/></g>
<g transform="translate(946,516.5)"><path d="M0,0 L3.5,3.5 L0,7Z" fill="#6a6a6a"/></g>
<g transform="translate(969,492.5)"><path d="M1,5 L4,8 L10,0.5" stroke="#222" stroke-width="2.8" fill="none"/><path d="M1.5,5 L4,7.3 L9.7,0.8" stroke="#f0f0f0" stroke-width="1.6" fill="none"/></g>
<g transform="translate(969,514.5)"><path d="M1,5 L4,8 L10,0.5" stroke="#222" stroke-width="2.8" fill="none"/><path d="M1.5,5 L4,7.3 L9.7,0.8" stroke="#f0f0f0" stroke-width="1.6" fill="none"/></g>
<path d="M702,100 L715,112 M702,104 L711,112 M702,108 L707,112" stroke="#2a2a2a" stroke-width="1.6"/><path d="M702,101.5 L713.5,112 M702,105.5 L709.5,112 M702,109.5 L705.5,112" stroke="#9a9a9a" stroke-width="0.9"/>
<path d="M1207,113 L1216,122 M1210,113 L1216,119 M1213,113 L1216,116" stroke="#222" stroke-width="1.3"/><path d="M1208,113 L1216,121 M1211,113 L1216,118 M1214,113 L1216,115" stroke="#a0a0a0" stroke-width="0.8"/>
<polyline points="955.5,303.5 1059.7,311.6 1069.8,353.3 957.5,364.1 963.5,317.7" fill="none" stroke="#ffff00" stroke-width="6" stroke-linejoin="round" stroke-linecap="round"/>
</svg>
</div>
</body></html>
